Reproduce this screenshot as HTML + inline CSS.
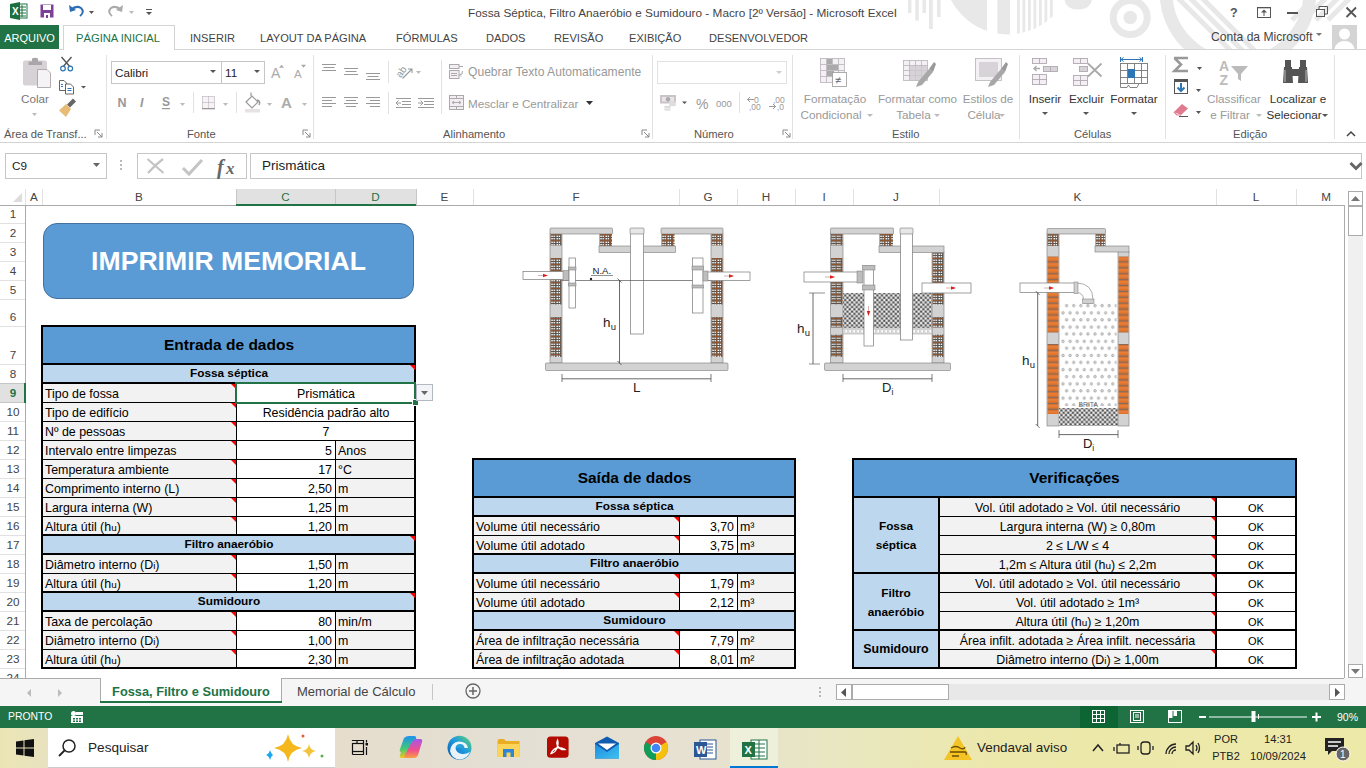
<!DOCTYPE html>
<html><head><meta charset="utf-8"><style>
html,body{margin:0;padding:0;width:1366px;height:768px;overflow:hidden;background:#fff}
body{position:relative;font-family:"Liberation Sans",sans-serif}
body>div,body>svg{position:absolute;white-space:nowrap}
small{font-size:80%}
</style></head><body>
<div style="left:0px;top:0px;width:1366px;height:50px;background:#fff"></div>
<svg style="left:880px;top:0px" width="486" height="50" viewBox="880 0 486 50">
<defs><clipPath id="wmc"><circle cx="1008" cy="-30" r="64.5"/></clipPath>
<clipPath id="wmb"><circle cx="1238" cy="-8" r="66"/></clipPath></defs>
<g fill="#e8e8e8">
<rect x="895" y="7.7" width="1.5" height="9.5"/>
<rect x="908" y="0" width="3.4" height="13"/><rect x="915.3" y="0" width="3.5" height="20.6"/><rect x="922.5" y="0" width="3.5" height="13"/><rect x="929" y="0" width="3.8" height="29"/><rect x="937" y="0" width="3.6" height="17"/>
<g clip-path="url(#wmc)">
<rect x="940" y="-40" width="47" height="80"/><rect x="997.4" y="-40" width="12.6" height="80"/>
<rect x="1017" y="-40" width="2.8" height="80"/><rect x="1022.5" y="-40" width="2.8" height="80"/><rect x="1028" y="-40" width="2.8" height="80"/><rect x="1033.5" y="-40" width="2.8" height="80"/><rect x="1039" y="-40" width="2.8" height="80"/><rect x="1044.5" y="-40" width="2.8" height="80"/><rect x="1050" y="-40" width="2.8" height="80"/>
</g>
<path d="M1064.5 0 H1092 Q1090 9.5 1078 9.5 Q1066 9.5 1064.5 0Z"/>
</g>
<circle cx="1130.2" cy="17.5" r="17" fill="none" stroke="#e8e8e8" stroke-width="7"/>
<circle cx="1130.2" cy="17.5" r="6.8" fill="#e8e8e8"/>
<circle cx="1238" cy="-8" r="72" fill="none" stroke="#e8e8e8" stroke-width="13"/>
<g clip-path="url(#wmb)" stroke="#e8e8e8" stroke-width="5">
<line x1="1170" y1="-10" x2="1240" y2="60"/><line x1="1182" y1="-10" x2="1252" y2="60"/><line x1="1194" y1="-10" x2="1264" y2="60"/>
</g>
<g stroke="#e8e8e8" stroke-width="5">
<line x1="1292" y1="20" x2="1322" y2="-10"/><line x1="1304" y1="20" x2="1334" y2="-10"/><line x1="1316" y1="20" x2="1346" y2="-10"/><line x1="1328" y1="20" x2="1358" y2="-10"/>
</g>
</svg>
<svg style="left:9px;top:2px" width="20" height="18" viewBox="0 0 20 18">
<rect x="7" y="2" width="11" height="14" fill="#fff" stroke="#217346" stroke-width="1"/>
<g stroke="#217346" stroke-width="1"><line x1="10" y1="5" x2="17" y2="5"/><line x1="10" y1="8" x2="17" y2="8"/><line x1="10" y1="11" x2="17" y2="11"/><line x1="10" y1="14" x2="17" y2="14"/><line x1="13" y1="3" x2="13" y2="15"/></g>
<path d="M1 2 L11 0 L11 18 L1 16Z" fill="#1d6f42"/>
<text x="3" y="13" fill="#fff" font-size="10" font-weight="bold" font-family="Liberation Sans">X</text>
</svg>
<svg style="left:40px;top:4px" width="14" height="14" viewBox="0 0 14 14">
<rect x="0.5" y="0.5" width="13" height="13" fill="#7e3f98"/><rect x="3" y="1" width="8" height="5" fill="#fff"/><rect x="4" y="9" width="6" height="5" fill="#fff"/><rect x="6" y="11" width="2" height="3" fill="#7e3f98"/>
</svg>
<svg style="left:68px;top:3px" width="90" height="16" viewBox="0 0 90 16">
<path d="M3 7 Q8 2 13 5 Q17 9 12 13" fill="none" stroke="#2e6db4" stroke-width="2"/><path d="M1 2 L2 9 L8 7Z" fill="#2e6db4"/>
<path d="M21 8 L26 8 L23.5 11Z" fill="#555"/>
<path d="M53 7 Q48 2 43 5 Q39 9 44 13" fill="none" stroke="#aaa" stroke-width="2"/><path d="M55 2 L54 9 L48 7Z" fill="#aaa"/>
<path d="M61 8 L66 8 L63.5 11Z" fill="#bbb"/>
<rect x="78" y="6" width="6" height="1" fill="#555"/><path d="M78 9 L84 9 L81 12Z" fill="#555"/>
</svg>
<div style="left:468px;top:5px;font-size:11.8px;color:#444;line-height:16px">Fossa Séptica, Filtro Anaeróbio e Sumidouro - Macro [2º Versão] - Microsoft Excel</div>
<svg style="left:1222px;top:2px" width="144" height="20" viewBox="0 0 144 20">
<text x="8" y="15" font-size="12.5" font-weight="bold" fill="#555" font-family="Liberation Sans">?</text>
<rect x="35.5" y="5.5" width="13" height="10" fill="none" stroke="#555" stroke-width="1"/><path d="M42 7.5 L39 10.5 L45 10.5Z" fill="#555"/><rect x="41.5" y="10" width="1" height="4" fill="#555"/><rect x="35.5" y="5" width="13" height="1.3" fill="#555"/>
<rect x="65" y="10" width="11" height="2" fill="#555"/>
<rect x="94.5" y="7.5" width="8" height="7" fill="none" stroke="#555"/><path d="M97 7 V4.5 H105.5 V12 H103" fill="none" stroke="#555"/>
<path d="M124.5 5.5 L134 15 M134 5.5 L124.5 15" stroke="#555" stroke-width="1.8"/>
</svg>
<div style="left:0px;top:25px;width:59px;height:24px;background:#217346"></div>
<div style="left:0px;top:26px;width:59px;height:25px;line-height:25px;text-align:center;color:#fff;font-size:11px">ARQUIVO</div>
<div style="left:63px;top:25px;width:112px;height:25px;background:#fff;border:1px solid #d4d4d4;border-bottom:none;box-sizing:border-box"></div>
<div style="left:76px;top:26px;height:25px;line-height:25px;color:#217346;font-size:11.2px">PÁGINA INICIAL</div>
<div style="left:190px;top:26px;height:25px;line-height:25px;color:#444;font-size:11.1px">INSERIR</div>
<div style="left:260px;top:26px;height:25px;line-height:25px;color:#444;font-size:11.1px">LAYOUT DA PÁGINA</div>
<div style="left:396px;top:26px;height:25px;line-height:25px;color:#444;font-size:11.1px">FÓRMULAS</div>
<div style="left:486px;top:26px;height:25px;line-height:25px;color:#444;font-size:11.1px">DADOS</div>
<div style="left:554px;top:26px;height:25px;line-height:25px;color:#444;font-size:11.1px">REVISÃO</div>
<div style="left:629px;top:26px;height:25px;line-height:25px;color:#444;font-size:11.1px">EXIBIÇÃO</div>
<div style="left:709px;top:26px;height:25px;line-height:25px;color:#444;font-size:11.1px">DESENVOLVEDOR</div>
<div style="left:1211px;top:26px;height:23px;line-height:23px;color:#444;font-size:12.1px">Conta da Microsoft</div>
<svg style="left:1316px;top:33px" width="6" height="4"><path d="M0 0 L6 0 L3 3Z" fill="#777"/></svg>
<svg style="left:1332px;top:25px" width="25" height="25" viewBox="0 0 25 25">
<rect width="25" height="25" fill="#d4d4d4"/><circle cx="12.5" cy="9" r="5.5" fill="#fff"/><path d="M2 25 Q4 16 12.5 16 Q21 16 23 25Z" fill="#fff"/>
</svg>
<div style="left:59px;top:49px;width:1307px;height:1px;background:#d4d4d4"></div>
<div style="left:64px;top:49px;width:110px;height:1px;background:#fff"></div>
<div style="left:0px;top:142px;width:1366px;height:1px;background:#d4d4d4"></div>
<div style="left:106px;top:55px;width:1px;height:84px;background:#e1e1e1"></div>
<div style="left:313px;top:55px;width:1px;height:84px;background:#e1e1e1"></div>
<div style="left:652px;top:55px;width:1px;height:84px;background:#e1e1e1"></div>
<div style="left:792px;top:55px;width:1px;height:84px;background:#e1e1e1"></div>
<div style="left:1019px;top:55px;width:1px;height:84px;background:#e1e1e1"></div>
<div style="left:1165px;top:55px;width:1px;height:84px;background:#e1e1e1"></div>
<div style="left:1334px;top:55px;width:1px;height:84px;background:#e1e1e1"></div>
<div style="left:4px;top:126px;height:17px;line-height:17px;color:#555;font-size:11.2px">Área de Transf...</div>
<div style="left:187px;top:126px;height:17px;line-height:17px;color:#555;font-size:11.2px">Fonte</div>
<div style="left:443px;top:126px;height:17px;line-height:17px;color:#555;font-size:11.2px">Alinhamento</div>
<div style="left:694px;top:126px;height:17px;line-height:17px;color:#555;font-size:11.2px">Número</div>
<div style="left:892px;top:126px;height:17px;line-height:17px;color:#555;font-size:11.2px">Estilo</div>
<div style="left:1074px;top:126px;height:17px;line-height:17px;color:#555;font-size:11.2px">Células</div>
<div style="left:1233px;top:126px;height:17px;line-height:17px;color:#555;font-size:11.2px">Edição</div>
<svg style="left:94px;top:129px" width="9" height="9"><path d="M1 1 H6 M1 1 V6" stroke="#888" fill="none"/><path d="M3 3 L8 8 M8 4 V8 H4" stroke="#888" fill="none"/></svg>
<svg style="left:302px;top:129px" width="9" height="9"><path d="M1 1 H6 M1 1 V6" stroke="#888" fill="none"/><path d="M3 3 L8 8 M8 4 V8 H4" stroke="#888" fill="none"/></svg>
<svg style="left:641px;top:129px" width="9" height="9"><path d="M1 1 H6 M1 1 V6" stroke="#888" fill="none"/><path d="M3 3 L8 8 M8 4 V8 H4" stroke="#888" fill="none"/></svg>
<svg style="left:782px;top:129px" width="9" height="9"><path d="M1 1 H6 M1 1 V6" stroke="#888" fill="none"/><path d="M3 3 L8 8 M8 4 V8 H4" stroke="#888" fill="none"/></svg>
<svg style="left:0px;top:50px" width="106" height="75" viewBox="0 50 106 75">
<rect x="23" y="60.5" width="24" height="25" rx="2" fill="#d6d2d6"/>
<path d="M28.5 65 V61.5 H32 V58.5 Q35 57 38 58.5 V61.5 H42 V65Z" fill="#a9a5a9"/>
<path d="M37.5 69.5 H47 L50.5 73 V87.5 H37.5Z" fill="#f6f3f6" stroke="#a9a5a9" stroke-width="0.9"/>
<path d="M32 113 L37 113 L34.5 116Z" fill="#bbb"/>
<path d="M61.5 57 L71 68 M71.5 57 L62 68" stroke="#555" stroke-width="1.4"/>
<circle cx="63" cy="68.5" r="2.3" fill="#fff" stroke="#2e75b6" stroke-width="1.2"/><circle cx="70.3" cy="68.5" r="2.3" fill="#fff" stroke="#2e75b6" stroke-width="1.2"/>
<path d="M59.5 80.5 H64 L66.5 83 V90.5 H59.5Z" fill="#fff" stroke="#555" stroke-width="0.9"/>
<path d="M61 84.5 H63 M61 86.5 H63" stroke="#2e75b6"/>
<path d="M65.5 84 H70.5 L73.5 87 V94 H65.5Z" fill="#fff" stroke="#555" stroke-width="0.9"/>
<path d="M67.5 88.5 H71.5 M67.5 90.5 H71.5" stroke="#2e75b6"/>
<path d="M81 86 L86 86 L83.5 88.5Z" fill="#555"/>
<path d="M59 110.5 L66 104 L71 109 L66 117Z" fill="#e6bc76"/><path d="M67 104.5 L73 98.5 L76 101.5 L70 107.5Z" fill="#666"/>
</svg>
<div style="left:21px;top:91px;height:16px;line-height:16px;color:#777;font-size:11.7px">Colar</div>
<div style="left:111px;top:61px;width:111px;height:23px;background:#fff;border:1px solid #c6c6c6;box-sizing:border-box"></div>
<div style="left:115px;top:61px;height:23px;line-height:23px;color:#222;font-size:11.7px">Calibri</div>
<svg style="left:210px;top:70px" width="6" height="4"><path d="M0 0 L6 0 L3 3Z" fill="#555"/></svg>
<div style="left:221px;top:61px;width:44px;height:23px;background:#fff;border:1px solid #c6c6c6;box-sizing:border-box"></div>
<div style="left:225px;top:61px;height:23px;line-height:23px;color:#222;font-size:11.7px">11</div>
<svg style="left:254px;top:70px" width="6" height="4"><path d="M0 0 L6 0 L3 3Z" fill="#555"/></svg>
<svg style="left:270px;top:62px" width="40" height="22" viewBox="0 0 40 22">
<text x="1" y="16" font-size="14" fill="#aaa" font-family="Liberation Sans">A</text><path d="M9 5.8 L11.5 2.7 L14 5.8Z" fill="#aaa"/>
<text x="24" y="16" font-size="11.5" fill="#aaa" font-family="Liberation Sans">A</text><path d="M31 2.7 L36 2.7 L33.5 5.8Z" fill="#aaa"/>
</svg>
<svg style="left:100px;top:85px" width="220" height="40" viewBox="100 85 220 40">
<text x="117.5" y="107" font-size="12.5" font-weight="bold" fill="#999" font-family="Liberation Sans">N</text>
<text x="140" y="107" font-size="12.5" font-weight="bold" font-style="italic" fill="#999" font-family="Liberation Sans">I</text>
<text x="162" y="106" font-size="12" font-weight="bold" fill="#999" font-family="Liberation Sans">S</text><rect x="162" y="108" width="8" height="1.2" fill="#999"/>
<path d="M180 103 L185 103 L182.5 106Z" fill="#bbb"/>
<rect x="193" y="92" width="1" height="21" fill="#e1e1e1"/>
<rect x="202" y="96" width="13" height="13" fill="#f6f2f6"/>
<g fill="none" stroke="#a8a0a8" stroke-width="0.9" stroke-dasharray="1 1"><path d="M202.5 96.5 H214.5 V108 M202.5 96.5 V108 M208.5 96.5 V108 M202.5 102.5 H214.5"/></g>
<rect x="202" y="108" width="13" height="1.3" fill="#999"/>
<path d="M223 103 L228 103 L225.5 106Z" fill="#bbb"/>
<rect x="236" y="92" width="1" height="21" fill="#e1e1e1"/>
<path d="M246 102 L252 96 L258 102 L252 108Z" fill="#fff" stroke="#999" stroke-width="1.2"/><path d="M251 96 V92.5" stroke="#999" stroke-width="1.2"/><path d="M257 100 Q261 101 259 105" stroke="#999" stroke-width="1.5" fill="none"/>
<rect x="245" y="109" width="15" height="3.5" fill="#e6e2e6"/>
<path d="M267 103 L272 103 L269.5 106Z" fill="#bbb"/>
<text x="281" y="108" font-size="15" font-weight="bold" fill="#aaa" font-family="Liberation Sans">A</text>
<path d="M302 103 L307 103 L304.5 106Z" fill="#bbb"/>
</svg>
<svg style="left:318px;top:60px" width="330" height="60" viewBox="0 0 330 60">
<g stroke="#999" stroke-width="1">
<line x1="4" y1="4.5" x2="18" y2="4.5"/><line x1="5.5" y1="7.5" x2="16.5" y2="7.5"/><line x1="4" y1="10.5" x2="18" y2="10.5"/>
<line x1="26" y1="8.5" x2="40" y2="8.5"/><line x1="27.5" y1="11.5" x2="38.5" y2="11.5"/><line x1="26" y1="14.5" x2="40" y2="14.5"/>
<line x1="48" y1="13.5" x2="62" y2="13.5"/><line x1="49.5" y1="16.5" x2="60.5" y2="16.5"/><line x1="48" y1="19.5" x2="62" y2="19.5"/>
<line x1="4" y1="37.5" x2="18" y2="37.5"/><line x1="4" y1="40.5" x2="14" y2="40.5"/><line x1="4" y1="43.5" x2="18" y2="43.5"/><line x1="4" y1="46.5" x2="14" y2="46.5"/>
<line x1="26" y1="37.5" x2="40" y2="37.5"/><line x1="28" y1="40.5" x2="38" y2="40.5"/><line x1="26" y1="43.5" x2="40" y2="43.5"/><line x1="28" y1="46.5" x2="38" y2="46.5"/>
<line x1="48" y1="37.5" x2="62" y2="37.5"/><line x1="52" y1="40.5" x2="62" y2="40.5"/><line x1="48" y1="43.5" x2="62" y2="43.5"/><line x1="52" y1="46.5" x2="62" y2="46.5"/>
<line x1="78" y1="38.5" x2="93" y2="38.5"/><line x1="84" y1="41.5" x2="93" y2="41.5"/><line x1="84" y1="44.5" x2="93" y2="44.5"/><line x1="78" y1="47.5" x2="93" y2="47.5"/>
<path d="M78 43 H83 M80.5 40.5 L78 43 L80.5 45.5" fill="none"/>
<line x1="100" y1="38.5" x2="116" y2="38.5"/><line x1="106" y1="41.5" x2="116" y2="41.5"/><line x1="106" y1="44.5" x2="116" y2="44.5"/><line x1="100" y1="47.5" x2="116" y2="47.5"/>
<path d="M100 43 H105 M102.5 40.5 L105 43 L102.5 45.5" fill="none"/>
</g>
<rect x="70" y="1" width="1" height="22" fill="#e1e1e1"/><rect x="70" y="32" width="1" height="22" fill="#e1e1e1"/>
<text x="77" y="15" font-size="10" fill="#999" font-family="Liberation Sans" transform="rotate(-55 83 11)">ab</text><path d="M84.5 18.5 L94 9 M90 9 H94 V13" stroke="#999" fill="none" stroke-width="1.1"/>
<path d="M98 11 L103 11 L100.5 14Z" fill="#bbb"/>
<rect x="123" y="0" width="1" height="54" fill="#e1e1e1"/>
<g fill="none" stroke="#aaa"><rect x="131.5" y="4.5" width="9.5" height="4" fill="#f4eef4"/><path d="M141 6.5 H145"/><rect x="131.5" y="10.5" width="9.5" height="8" fill="#f4eef4"/><path d="M133 13.5 H139 M133 15.5 H139 M144.5 11 Q145 15 141.5 15 M143 13.5 L141.5 15 L143 16.5"/>
<rect x="131.5" y="35.5" width="14" height="14" fill="#f4eef4"/><path d="M131.5 38.5 H145.5 M131.5 46.5 H145.5 M138.5 35.5 V38.5 M138.5 46.5 V49.5 M134 42.5 H143 M136 41 L134 42.5 L136 44 M141 41 L143 42.5 L141 44"/></g>
</svg>
<div style="left:468px;top:64px;height:17px;line-height:17px;color:#999;font-size:12.1px">Quebrar Texto Automaticamente</div>
<div style="left:468px;top:95px;height:17px;line-height:17px;color:#999;font-size:11.7px">Mesclar e Centralizar</div>
<svg style="left:586px;top:101px" width="7" height="4"><path d="M0 0 L7 0 L3.5 4Z" fill="#333"/></svg>
<div style="left:657px;top:61px;width:130px;height:23px;background:#fff;border:1px solid #e1e1e1;box-sizing:border-box"></div>
<svg style="left:776px;top:71px" width="6" height="4"><path d="M0 0 L6 0 L3 3Z" fill="#ccc"/></svg>
<svg style="left:650px;top:85px" width="150" height="40" viewBox="650 85 150 40">
<rect x="660" y="95" width="16" height="8.5" fill="#c8c4c8"/><rect x="662" y="97" width="12" height="4.5" fill="#e8e4e8"/><circle cx="668" cy="99.2" r="2.2" fill="#aaa"/>
<ellipse cx="672.5" cy="102.5" rx="3.5" ry="1.3" fill="#ddd"/><ellipse cx="672.5" cy="105" rx="3.5" ry="1.3" fill="#ddd"/><ellipse cx="667.5" cy="107" rx="3.5" ry="1.3" fill="#ddd"/><ellipse cx="667.5" cy="109.5" rx="3.5" ry="1.3" fill="#e2e2e2"/>
<path d="M682 101.5 L687 101.5 L684.5 104Z" fill="#555"/>
<text x="696" y="109" font-size="14" fill="#999" font-family="Liberation Sans">%</text>
<text x="716" y="106.5" font-size="9.5" fill="#999" font-family="Liberation Sans">000</text>
<rect x="739" y="92" width="1" height="21" fill="#e1e1e1"/>
<text x="754" y="103" font-size="8.5" fill="#999" font-family="Liberation Sans">0</text><text x="749" y="109.5" font-size="8.5" fill="#999" font-family="Liberation Sans">,00</text>
<path d="M754 99.5 H747.5 M750 97 L747.5 99.5 L750 102" stroke="#999" fill="none"/>
<text x="773" y="103" font-size="8.5" fill="#999" font-family="Liberation Sans">,00</text><text x="777" y="109.5" font-size="8.5" fill="#999" font-family="Liberation Sans">,0</text>
<path d="M769 106.5 H775.5 M773 104 L775.5 106.5 L773 109" stroke="#999" fill="none"/>
</svg>
<svg style="left:815px;top:56px" width="200" height="34" viewBox="0 0 200 34">
<g stroke="#b8b2b8" stroke-width="0.8" fill="#f4f1f4">
<rect x="5.5" y="2.5" width="24" height="24"/>
<path d="M5.5 8.5 H29.5 M5.5 14.5 H29.5 M5.5 20.5 H29.5 M11.5 2.5 V26.5 M17.5 2.5 V26.5 M23.5 2.5 V26.5" fill="none"/>
</g>
<rect x="12" y="3" width="5" height="5" fill="#aaa"/><rect x="12" y="9" width="11" height="5" fill="#aaa"/><rect x="12" y="15" width="7" height="5" fill="#aaa"/>
<rect x="17.5" y="16.5" width="14" height="14" fill="#fff" stroke="#999" stroke-width="0.8"/>
<text x="20" y="28" font-size="11" fill="#666" font-family="Liberation Sans">≠</text>
<g stroke="#b8b2b8" stroke-width="0.8" fill="#f4f1f4">
<rect x="88.5" y="4.5" width="24" height="20"/>
<path d="M88.5 9.5 H112.5 M88.5 14.5 H112.5 M88.5 19.5 H112.5 M94.5 4.5 V24.5 M100.5 4.5 V24.5 M106.5 4.5 V24.5" fill="none"/>
</g>
<rect x="95" y="10" width="17" height="14" fill="#cfcacf" opacity="0.8"/>
<path d="M101 31 L103 26 L114 13 L118 16 L107 29Z" fill="#a8a8a8"/><path d="M114 13 L119 6 L121 8 L118 16Z" fill="#999"/>
<g stroke="#b8b2b8" stroke-width="0.8" fill="#f4f1f4"><rect x="160.5" y="2.5" width="26" height="22"/></g>
<rect x="164" y="6" width="19" height="15" fill="#d8d3d8"/>
<path d="M173 31 L175 26 L186 13 L190 16 L179 29Z" fill="#a8a8a8"/><path d="M186 13 L191 6 L193 8 L190 16Z" fill="#999"/>
</svg>
<div style="left:799px;top:90px;width:72px;height:17px;line-height:17px;text-align:center;color:#999;font-size:11.7px">Formatação</div>
<div style="left:795px;top:106px;width:72px;height:17px;line-height:17px;text-align:center;color:#999;font-size:11.7px">Condicional</div>
<svg style="left:867px;top:114px" width="6" height="4"><path d="M0 0 L6 0 L3 3Z" fill="#bbb"/></svg>
<div style="left:875px;top:90px;width:85px;height:17px;line-height:17px;text-align:center;color:#999;font-size:11.7px">Formatar como</div>
<div style="left:871px;top:106px;width:85px;height:17px;line-height:17px;text-align:center;color:#999;font-size:11.7px">Tabela</div>
<svg style="left:934px;top:114px" width="6" height="4"><path d="M0 0 L6 0 L3 3Z" fill="#bbb"/></svg>
<div style="left:962px;top:90px;width:52px;height:17px;line-height:17px;text-align:center;color:#999;font-size:11.7px">Estilos de</div>
<div style="left:958px;top:106px;width:52px;height:17px;line-height:17px;text-align:center;color:#999;font-size:11.7px">Célula</div>
<svg style="left:999px;top:114px" width="6" height="4"><path d="M0 0 L6 0 L3 3Z" fill="#bbb"/></svg>
<svg style="left:1000px;top:50px" width="170" height="40" viewBox="1000 50 170 40">
<g fill="#f4eff4" stroke="#b0a8b0" stroke-width="0.9">
<rect x="1032.5" y="58.5" width="14" height="5"/><line x1="1039.5" y1="58.5" x2="1039.5" y2="63.5"/>
<rect x="1043.5" y="66.5" width="14" height="5" fill="#d8d3d8"/><line x1="1050.5" y1="66.5" x2="1050.5" y2="71.5"/>
<rect x="1032.5" y="74.5" width="14" height="10"/><path d="M1032.5 79.5 H1046.5 M1039.5 74.5 V84.5"/>
<rect x="1073.5" y="58.5" width="14" height="5"/><line x1="1080.5" y1="58.5" x2="1080.5" y2="63.5"/>
<rect x="1079.5" y="66.5" width="8" height="5" fill="#d8d3d8"/>
<rect x="1073.5" y="75.5" width="14" height="10"/><path d="M1073.5 80.5 H1087.5 M1080.5 75.5 V85.5"/>
</g>
<path d="M1040 68.5 H1034 M1036.5 66 L1034 68.5 L1036.5 71" stroke="#aaa" stroke-width="1.3" fill="none"/>
<path d="M1088 63.5 L1101.5 76.5 M1101.5 63.5 L1088 76.5" stroke="#aaa" stroke-width="1.8"/>
<g fill="#fff" stroke="#777" stroke-width="0.9">
<rect x="1120.5" y="63.5" width="27" height="20"/>
<path d="M1120.5 70.5 H1147.5 M1120.5 77.5 H1147.5 M1127.5 63.5 V83.5 M1134.5 63.5 V83.5 M1141.5 63.5 V83.5" fill="none"/>
<path d="M1120.5 83.5 V87.5 H1127 L1128.5 85 L1130 87.5 H1137 L1139 83.5" fill="none"/>
</g>
<rect x="1128" y="69" width="7" height="9" fill="#2e75b6"/>
<path d="M1120.5 59.5 H1142.5 M1120.5 57 V62 M1142.5 57 V62 M1123.5 57.5 L1121 59.5 L1123.5 61.5 M1139.5 57.5 L1142 59.5 L1139.5 61.5" stroke="#2e75b6" stroke-width="1" fill="none"/>
</svg>
<div style="left:1027px;top:90px;width:36px;height:17px;line-height:17px;text-align:center;color:#333;font-size:11.7px">Inserir</div>
<svg style="left:1042px;top:112px" width="6" height="4"><path d="M0 0 L6 0 L3 3Z" fill="#555"/></svg>
<div style="left:1068px;top:90px;width:37px;height:17px;line-height:17px;text-align:center;color:#333;font-size:11.7px">Excluir</div>
<svg style="left:1083px;top:112px" width="6" height="4"><path d="M0 0 L6 0 L3 3Z" fill="#555"/></svg>
<div style="left:1109px;top:90px;width:50px;height:17px;line-height:17px;text-align:center;color:#333;font-size:11.7px">Formatar</div>
<svg style="left:1131px;top:112px" width="6" height="4"><path d="M0 0 L6 0 L3 3Z" fill="#555"/></svg>
<svg style="left:1170px;top:54px" width="160" height="70" viewBox="0 0 160 70">
<path d="M4 4 H18 M4.5 4 L11 10.5 L4.5 17 H18" stroke="#999" stroke-width="2.6" fill="none" stroke-linejoin="miter"/><path d="M27 13 L32 13 L29.5 16Z" fill="#555"/>
<rect x="4.5" y="25.5" width="13" height="14" fill="#fff" stroke="#555"/><rect x="4" y="25" width="14" height="3" fill="#555"/><path d="M11 29 V37 M7.5 33.5 L11 37 L14.5 33.5" stroke="#2e75b6" stroke-width="2" fill="none"/>
<path d="M26 35 L31 35 L28.5 38Z" fill="#555"/>
<path d="M4 58 L12 50 L18 54.5 L11 61Z" fill="#e07a8e"/><path d="M4 58 L7 61 H11" stroke="#e07a8e" stroke-width="1.2" fill="none"/><path d="M9 62.5 H18" stroke="#555"/><path d="M26 57 L31 57 L28.5 60Z" fill="#555"/>
<text x="49" y="17" font-size="14" font-weight="bold" fill="#bbb" font-family="Liberation Sans">A</text><text x="49.5" y="31" font-size="14" font-weight="bold" fill="#bbb" font-family="Liberation Sans">Z</text>
<path d="M61 12 H78 L71 20 V27 L68 25 V20Z" fill="#bbb"/>
<g transform="translate(113,6)" fill="#555"><rect x="2" y="0" width="6" height="7"/><rect x="17" y="0" width="6" height="7"/><path d="M1 7 H9 L10 23 H0Z"/><path d="M16 7 H24 L25 23 H15Z"/><rect x="9" y="9" width="7" height="7"/><g fill="#fff" opacity="0.6"><rect x="1.5" y="10" width="1" height="12"/><rect x="22.5" y="10" width="1" height="12"/></g></g>
</svg>
<div style="left:1204px;top:90px;width:60px;height:17px;line-height:17px;text-align:center;color:#999;font-size:11.7px">Classificar</div>
<div style="left:1200px;top:106px;width:60px;height:17px;line-height:17px;text-align:center;color:#999;font-size:11.7px">e Filtrar</div>
<svg style="left:1256px;top:114px" width="6" height="4"><path d="M0 0 L6 0 L3 3Z" fill="#bbb"/></svg>
<div style="left:1265px;top:90px;width:66px;height:17px;line-height:17px;text-align:center;color:#333;font-size:11.7px">Localizar e</div>
<div style="left:1261px;top:106px;width:66px;height:17px;line-height:17px;text-align:center;color:#333;font-size:11.7px">Selecionar</div>
<svg style="left:1322px;top:114px" width="6" height="4"><path d="M0 0 L6 0 L3 3Z" fill="#555"/></svg>
<svg style="left:1346px;top:130px" width="10" height="7"><path d="M1 6 L5 2 L9 6" stroke="#444" stroke-width="1.5" fill="none"/></svg>
<div style="left:0px;top:143px;width:1366px;height:46px;background:#fff"></div>
<div style="left:5px;top:153px;width:102px;height:26px;background:#fff;border:1px solid #c6c6c6;box-sizing:border-box"></div>
<div style="left:12px;top:153px;height:26px;line-height:26px;color:#222;font-size:11.7px">C9</div>
<svg style="left:93px;top:163px" width="7" height="5"><path d="M0 0 L7 0 L3.5 4Z" fill="#666"/></svg>
<svg style="left:119px;top:159px" width="4" height="14"><circle cx="2" cy="2" r="0.9" fill="#999"/><circle cx="2" cy="6" r="0.9" fill="#999"/><circle cx="2" cy="10" r="0.9" fill="#999"/></svg>
<div style="left:137px;top:153px;width:110px;height:26px;background:#fff;border:1px solid #c6c6c6;box-sizing:border-box"></div>
<svg style="left:137px;top:153px" width="110" height="26" viewBox="0 0 110 26">
<path d="M10.5 6 L26.5 20 M26 6 Q18 12 11 20" stroke="#c4c4c4" stroke-width="2.2" fill="none"/>
<path d="M46 15 L52 21 L65 7" stroke="#c4c4c4" stroke-width="3" fill="none"/>
<text x="80" y="20.5" font-size="20" font-style="italic" font-weight="bold" fill="#666" font-family="Liberation Serif">f</text><text x="89" y="20.5" font-size="17" font-style="italic" font-weight="bold" fill="#666" font-family="Liberation Serif">x</text>
</svg>
<div style="left:250px;top:153px;width:1112px;height:26px;background:#fff;border:1px solid #c6c6c6;box-sizing:border-box"></div>
<div style="left:262px;top:153px;height:26px;line-height:26px;color:#222;font-size:13.5px">Prismática</div>
<svg style="left:1349px;top:161px" width="14" height="10"><path d="M1.5 2 L7 7.5 L12.5 2" stroke="#666" stroke-width="3" fill="none"/></svg>
<div style="left:26px;top:206px;width:1318px;height:472px;background:#fff"></div>
<div style="left:0px;top:189px;width:1345px;height:16px;background:#fff"></div>
<svg style="left:13px;top:193px" width="9" height="9"><path d="M9 0 L9 9 L0 9Z" fill="#dcdcdc"/></svg>
<div style="left:25px;top:189px;width:1px;height:16px;background:#e1e1e1"></div>
<div style="left:0px;top:205px;width:1345px;height:1px;background:#ababab"></div>
<div style="left:26px;top:189px;width:16px;height:16px;line-height:16px;text-align:center;color:#444;font-size:11.7px">A</div>
<div style="left:42px;top:189px;width:194px;height:16px;line-height:16px;text-align:center;color:#444;font-size:11.7px">B</div>
<div style="left:236px;top:189px;width:99px;height:16px;background:#e1e1e1"></div>
<div style="left:236px;top:189px;width:99px;height:16px;line-height:16px;text-align:center;color:#217346;font-size:11.7px">C</div>
<div style="left:335px;top:189px;width:81px;height:16px;background:#e1e1e1"></div>
<div style="left:335px;top:189px;width:81px;height:16px;line-height:16px;text-align:center;color:#217346;font-size:11.7px">D</div>
<div style="left:416px;top:189px;width:57px;height:16px;line-height:16px;text-align:center;color:#444;font-size:11.7px">E</div>
<div style="left:473px;top:189px;width:206px;height:16px;line-height:16px;text-align:center;color:#444;font-size:11.7px">F</div>
<div style="left:679px;top:189px;width:58px;height:16px;line-height:16px;text-align:center;color:#444;font-size:11.7px">G</div>
<div style="left:737px;top:189px;width:58px;height:16px;line-height:16px;text-align:center;color:#444;font-size:11.7px">H</div>
<div style="left:795px;top:189px;width:58px;height:16px;line-height:16px;text-align:center;color:#444;font-size:11.7px">I</div>
<div style="left:853px;top:189px;width:86px;height:16px;line-height:16px;text-align:center;color:#444;font-size:11.7px">J</div>
<div style="left:939px;top:189px;width:277px;height:16px;line-height:16px;text-align:center;color:#444;font-size:11.7px">K</div>
<div style="left:1216px;top:189px;width:80px;height:16px;line-height:16px;text-align:center;color:#444;font-size:11.7px">L</div>
<div style="left:1296px;top:189px;width:60px;height:16px;line-height:16px;text-align:center;color:#444;font-size:11.7px">M</div>
<div style="left:42px;top:189px;width:1px;height:16px;background:#e1e1e1"></div>
<div style="left:236px;top:189px;width:1px;height:16px;background:#c6c6c6"></div>
<div style="left:335px;top:189px;width:1px;height:16px;background:#c6c6c6"></div>
<div style="left:416px;top:189px;width:1px;height:16px;background:#c6c6c6"></div>
<div style="left:473px;top:189px;width:1px;height:16px;background:#e1e1e1"></div>
<div style="left:679px;top:189px;width:1px;height:16px;background:#e1e1e1"></div>
<div style="left:737px;top:189px;width:1px;height:16px;background:#e1e1e1"></div>
<div style="left:795px;top:189px;width:1px;height:16px;background:#e1e1e1"></div>
<div style="left:853px;top:189px;width:1px;height:16px;background:#e1e1e1"></div>
<div style="left:939px;top:189px;width:1px;height:16px;background:#e1e1e1"></div>
<div style="left:1216px;top:189px;width:1px;height:16px;background:#e1e1e1"></div>
<div style="left:1296px;top:189px;width:1px;height:16px;background:#e1e1e1"></div>
<div style="left:1356px;top:189px;width:1px;height:16px;background:#e1e1e1"></div>
<div style="left:236px;top:204px;width:180px;height:2px;background:#217346"></div>
<div style="left:0px;top:206px;width:25px;height:472px;background:#fff"></div>
<div style="left:0px;top:223px;width:25px;height:1px;background:#e1e1e1"></div>
<div style="left:1px;top:205px;width:24px;height:18px;line-height:18px;text-align:center;color:#444;font-size:11.7px">1</div>
<div style="left:0px;top:242px;width:25px;height:1px;background:#e1e1e1"></div>
<div style="left:1px;top:224px;width:24px;height:18px;line-height:18px;text-align:center;color:#444;font-size:11.7px">2</div>
<div style="left:0px;top:261px;width:25px;height:1px;background:#e1e1e1"></div>
<div style="left:1px;top:243px;width:24px;height:18px;line-height:18px;text-align:center;color:#444;font-size:11.7px">3</div>
<div style="left:0px;top:280px;width:25px;height:1px;background:#e1e1e1"></div>
<div style="left:1px;top:262px;width:24px;height:18px;line-height:18px;text-align:center;color:#444;font-size:11.7px">4</div>
<div style="left:0px;top:299px;width:25px;height:1px;background:#e1e1e1"></div>
<div style="left:1px;top:281px;width:24px;height:18px;line-height:18px;text-align:center;color:#444;font-size:11.7px">5</div>
<div style="left:0px;top:326px;width:25px;height:1px;background:#e1e1e1"></div>
<div style="left:1px;top:308px;width:24px;height:18px;line-height:18px;text-align:center;color:#444;font-size:11.7px">6</div>
<div style="left:0px;top:364px;width:25px;height:1px;background:#e1e1e1"></div>
<div style="left:1px;top:346px;width:24px;height:18px;line-height:18px;text-align:center;color:#444;font-size:11.7px">7</div>
<div style="left:0px;top:383px;width:25px;height:1px;background:#e1e1e1"></div>
<div style="left:1px;top:365px;width:24px;height:18px;line-height:18px;text-align:center;color:#444;font-size:11.7px">8</div>
<div style="left:0px;top:383px;width:24px;height:20px;background:#e1e1e1;border-top:1px solid #c6c6c6;border-bottom:1px solid #c6c6c6;box-sizing:border-box"></div>
<div style="left:1px;top:384px;width:24px;height:18px;line-height:18px;text-align:center;color:#217346;font-size:11.7px;font-weight:bold">9</div>
<div style="left:0px;top:421px;width:25px;height:1px;background:#e1e1e1"></div>
<div style="left:1px;top:403px;width:24px;height:18px;line-height:18px;text-align:center;color:#444;font-size:11.7px">10</div>
<div style="left:0px;top:440px;width:25px;height:1px;background:#e1e1e1"></div>
<div style="left:1px;top:422px;width:24px;height:18px;line-height:18px;text-align:center;color:#444;font-size:11.7px">11</div>
<div style="left:0px;top:459px;width:25px;height:1px;background:#e1e1e1"></div>
<div style="left:1px;top:441px;width:24px;height:18px;line-height:18px;text-align:center;color:#444;font-size:11.7px">12</div>
<div style="left:0px;top:478px;width:25px;height:1px;background:#e1e1e1"></div>
<div style="left:1px;top:460px;width:24px;height:18px;line-height:18px;text-align:center;color:#444;font-size:11.7px">13</div>
<div style="left:0px;top:497px;width:25px;height:1px;background:#e1e1e1"></div>
<div style="left:1px;top:479px;width:24px;height:18px;line-height:18px;text-align:center;color:#444;font-size:11.7px">14</div>
<div style="left:0px;top:516px;width:25px;height:1px;background:#e1e1e1"></div>
<div style="left:1px;top:498px;width:24px;height:18px;line-height:18px;text-align:center;color:#444;font-size:11.7px">15</div>
<div style="left:0px;top:535px;width:25px;height:1px;background:#e1e1e1"></div>
<div style="left:1px;top:517px;width:24px;height:18px;line-height:18px;text-align:center;color:#444;font-size:11.7px">16</div>
<div style="left:0px;top:554px;width:25px;height:1px;background:#e1e1e1"></div>
<div style="left:1px;top:536px;width:24px;height:18px;line-height:18px;text-align:center;color:#444;font-size:11.7px">17</div>
<div style="left:0px;top:573px;width:25px;height:1px;background:#e1e1e1"></div>
<div style="left:1px;top:555px;width:24px;height:18px;line-height:18px;text-align:center;color:#444;font-size:11.7px">18</div>
<div style="left:0px;top:592px;width:25px;height:1px;background:#e1e1e1"></div>
<div style="left:1px;top:574px;width:24px;height:18px;line-height:18px;text-align:center;color:#444;font-size:11.7px">19</div>
<div style="left:0px;top:611px;width:25px;height:1px;background:#e1e1e1"></div>
<div style="left:1px;top:593px;width:24px;height:18px;line-height:18px;text-align:center;color:#444;font-size:11.7px">20</div>
<div style="left:0px;top:630px;width:25px;height:1px;background:#e1e1e1"></div>
<div style="left:1px;top:612px;width:24px;height:18px;line-height:18px;text-align:center;color:#444;font-size:11.7px">21</div>
<div style="left:0px;top:649px;width:25px;height:1px;background:#e1e1e1"></div>
<div style="left:1px;top:631px;width:24px;height:18px;line-height:18px;text-align:center;color:#444;font-size:11.7px">22</div>
<div style="left:0px;top:668px;width:25px;height:1px;background:#e1e1e1"></div>
<div style="left:1px;top:650px;width:24px;height:18px;line-height:18px;text-align:center;color:#444;font-size:11.7px">23</div>
<div style="left:1px;top:669px;width:24px;height:18px;line-height:18px;text-align:center;color:#444;font-size:11.7px">24</div>
<div style="left:25px;top:206px;width:1px;height:472px;background:#ababab"></div>
<div style="left:24px;top:383px;width:2px;height:20px;background:#217346"></div>
<div style="left:43px;top:223px;width:371px;height:76px;background:#5b9bd5;border:1px solid #41719c;border-radius:14px;box-sizing:border-box"></div>
<div style="left:43px;top:223px;width:371px;height:76px;line-height:76px;text-align:center;color:#fff;font-size:26.6px;font-weight:bold">IMPRIMIR MEMORIAL</div>
<div style="left:42px;top:326px;width:374px;height:38px;background:#5b9bd5"></div>
<div style="left:42px;top:326px;width:374px;height:38px;line-height:38px;text-align:center;font-size:15.5px;color:#000;white-space:nowrap;font-weight:bold;">Entrada de dados</div>
<div style="left:42px;top:364px;width:374px;height:19px;background:#bdd7ee"></div>
<div style="left:42px;top:364px;width:374px;height:19px;line-height:19px;text-align:center;font-size:11.8px;color:#000;white-space:nowrap;font-weight:bold;">Fossa séptica</div>
<div style="left:42px;top:383px;width:194px;height:19px;background:#f2f2f2"></div>
<div style="left:42px;top:386px;width:194px;height:17px;line-height:17px;font-size:12.4px;color:#000;white-space:nowrap;padding-left:3px;box-sizing:border-box;">Tipo de fossa</div>
<div style="left:236px;top:383px;width:180px;height:19px;background:#fff"></div>
<div style="left:236px;top:386px;width:180px;height:17px;line-height:17px;text-align:center;font-size:12.4px;color:#000;white-space:nowrap;">Prismática</div>
<div style="left:42px;top:402px;width:194px;height:19px;background:#f2f2f2"></div>
<div style="left:42px;top:405px;width:194px;height:17px;line-height:17px;font-size:12.4px;color:#000;white-space:nowrap;padding-left:3px;box-sizing:border-box;">Tipo de edifício</div>
<div style="left:236px;top:402px;width:180px;height:19px;background:#fff"></div>
<div style="left:236px;top:405px;width:180px;height:17px;line-height:17px;text-align:center;font-size:12.4px;color:#000;white-space:nowrap;">Residência padrão alto</div>
<div style="left:42px;top:421px;width:194px;height:19px;background:#f2f2f2"></div>
<div style="left:42px;top:424px;width:194px;height:17px;line-height:17px;font-size:12.4px;color:#000;white-space:nowrap;padding-left:3px;box-sizing:border-box;">Nº de pessoas</div>
<div style="left:236px;top:421px;width:180px;height:19px;background:#fff"></div>
<div style="left:236px;top:424px;width:180px;height:17px;line-height:17px;text-align:center;font-size:12.4px;color:#000;white-space:nowrap;">7</div>
<div style="left:42px;top:440px;width:194px;height:19px;background:#f2f2f2"></div>
<div style="left:42px;top:443px;width:194px;height:17px;line-height:17px;font-size:12.4px;color:#000;white-space:nowrap;padding-left:3px;box-sizing:border-box;">Intervalo entre limpezas</div>
<div style="left:236px;top:440px;width:99px;height:19px;background:#fff"></div>
<div style="left:236px;top:443px;width:99px;height:17px;line-height:17px;text-align:right;font-size:12.4px;color:#000;white-space:nowrap;padding-right:3px;box-sizing:border-box;">5</div>
<div style="left:335px;top:440px;width:81px;height:19px;background:#f2f2f2"></div>
<div style="left:335px;top:443px;width:81px;height:17px;line-height:17px;font-size:12.4px;color:#000;white-space:nowrap;padding-left:3px;box-sizing:border-box;">Anos</div>
<div style="left:42px;top:459px;width:194px;height:19px;background:#f2f2f2"></div>
<div style="left:42px;top:462px;width:194px;height:17px;line-height:17px;font-size:12.4px;color:#000;white-space:nowrap;padding-left:3px;box-sizing:border-box;">Temperatura ambiente</div>
<div style="left:236px;top:459px;width:99px;height:19px;background:#fff"></div>
<div style="left:236px;top:462px;width:99px;height:17px;line-height:17px;text-align:right;font-size:12.4px;color:#000;white-space:nowrap;padding-right:3px;box-sizing:border-box;">17</div>
<div style="left:335px;top:459px;width:81px;height:19px;background:#f2f2f2"></div>
<div style="left:335px;top:462px;width:81px;height:17px;line-height:17px;font-size:12.4px;color:#000;white-space:nowrap;padding-left:3px;box-sizing:border-box;">°C</div>
<div style="left:42px;top:478px;width:194px;height:19px;background:#f2f2f2"></div>
<div style="left:42px;top:481px;width:194px;height:17px;line-height:17px;font-size:12.4px;color:#000;white-space:nowrap;padding-left:3px;box-sizing:border-box;">Comprimento interno (L)</div>
<div style="left:236px;top:478px;width:99px;height:19px;background:#fff"></div>
<div style="left:236px;top:481px;width:99px;height:17px;line-height:17px;text-align:right;font-size:12.4px;color:#000;white-space:nowrap;padding-right:3px;box-sizing:border-box;">2,50</div>
<div style="left:335px;top:478px;width:81px;height:19px;background:#f2f2f2"></div>
<div style="left:335px;top:481px;width:81px;height:17px;line-height:17px;font-size:12.4px;color:#000;white-space:nowrap;padding-left:3px;box-sizing:border-box;">m</div>
<div style="left:42px;top:497px;width:194px;height:19px;background:#f2f2f2"></div>
<div style="left:42px;top:500px;width:194px;height:17px;line-height:17px;font-size:12.4px;color:#000;white-space:nowrap;padding-left:3px;box-sizing:border-box;">Largura interna (W)</div>
<div style="left:236px;top:497px;width:99px;height:19px;background:#fff"></div>
<div style="left:236px;top:500px;width:99px;height:17px;line-height:17px;text-align:right;font-size:12.4px;color:#000;white-space:nowrap;padding-right:3px;box-sizing:border-box;">1,25</div>
<div style="left:335px;top:497px;width:81px;height:19px;background:#f2f2f2"></div>
<div style="left:335px;top:500px;width:81px;height:17px;line-height:17px;font-size:12.4px;color:#000;white-space:nowrap;padding-left:3px;box-sizing:border-box;">m</div>
<div style="left:42px;top:516px;width:194px;height:19px;background:#f2f2f2"></div>
<div style="left:42px;top:519px;width:194px;height:17px;line-height:17px;font-size:12.4px;color:#000;white-space:nowrap;padding-left:3px;box-sizing:border-box;">Altura útil (h<small>u</small>)</div>
<div style="left:236px;top:516px;width:99px;height:19px;background:#fff"></div>
<div style="left:236px;top:519px;width:99px;height:17px;line-height:17px;text-align:right;font-size:12.4px;color:#000;white-space:nowrap;padding-right:3px;box-sizing:border-box;">1,20</div>
<div style="left:335px;top:516px;width:81px;height:19px;background:#f2f2f2"></div>
<div style="left:335px;top:519px;width:81px;height:17px;line-height:17px;font-size:12.4px;color:#000;white-space:nowrap;padding-left:3px;box-sizing:border-box;">m</div>
<div style="left:42px;top:554px;width:194px;height:19px;background:#f2f2f2"></div>
<div style="left:42px;top:557px;width:194px;height:17px;line-height:17px;font-size:12.4px;color:#000;white-space:nowrap;padding-left:3px;box-sizing:border-box;">Diâmetro interno (D<small>i</small>)</div>
<div style="left:236px;top:554px;width:99px;height:19px;background:#fff"></div>
<div style="left:236px;top:557px;width:99px;height:17px;line-height:17px;text-align:right;font-size:12.4px;color:#000;white-space:nowrap;padding-right:3px;box-sizing:border-box;">1,50</div>
<div style="left:335px;top:554px;width:81px;height:19px;background:#f2f2f2"></div>
<div style="left:335px;top:557px;width:81px;height:17px;line-height:17px;font-size:12.4px;color:#000;white-space:nowrap;padding-left:3px;box-sizing:border-box;">m</div>
<div style="left:42px;top:573px;width:194px;height:19px;background:#f2f2f2"></div>
<div style="left:42px;top:576px;width:194px;height:17px;line-height:17px;font-size:12.4px;color:#000;white-space:nowrap;padding-left:3px;box-sizing:border-box;">Altura útil (h<small>u</small>)</div>
<div style="left:236px;top:573px;width:99px;height:19px;background:#fff"></div>
<div style="left:236px;top:576px;width:99px;height:17px;line-height:17px;text-align:right;font-size:12.4px;color:#000;white-space:nowrap;padding-right:3px;box-sizing:border-box;">1,20</div>
<div style="left:335px;top:573px;width:81px;height:19px;background:#f2f2f2"></div>
<div style="left:335px;top:576px;width:81px;height:17px;line-height:17px;font-size:12.4px;color:#000;white-space:nowrap;padding-left:3px;box-sizing:border-box;">m</div>
<div style="left:42px;top:611px;width:194px;height:19px;background:#f2f2f2"></div>
<div style="left:42px;top:614px;width:194px;height:17px;line-height:17px;font-size:12.4px;color:#000;white-space:nowrap;padding-left:3px;box-sizing:border-box;">Taxa de percolação</div>
<div style="left:236px;top:611px;width:99px;height:19px;background:#fff"></div>
<div style="left:236px;top:614px;width:99px;height:17px;line-height:17px;text-align:right;font-size:12.4px;color:#000;white-space:nowrap;padding-right:3px;box-sizing:border-box;">80</div>
<div style="left:335px;top:611px;width:81px;height:19px;background:#f2f2f2"></div>
<div style="left:335px;top:614px;width:81px;height:17px;line-height:17px;font-size:12.4px;color:#000;white-space:nowrap;padding-left:3px;box-sizing:border-box;">min/m</div>
<div style="left:42px;top:630px;width:194px;height:19px;background:#f2f2f2"></div>
<div style="left:42px;top:633px;width:194px;height:17px;line-height:17px;font-size:12.4px;color:#000;white-space:nowrap;padding-left:3px;box-sizing:border-box;">Diâmetro interno (D<small>i</small>)</div>
<div style="left:236px;top:630px;width:99px;height:19px;background:#fff"></div>
<div style="left:236px;top:633px;width:99px;height:17px;line-height:17px;text-align:right;font-size:12.4px;color:#000;white-space:nowrap;padding-right:3px;box-sizing:border-box;">1,00</div>
<div style="left:335px;top:630px;width:81px;height:19px;background:#f2f2f2"></div>
<div style="left:335px;top:633px;width:81px;height:17px;line-height:17px;font-size:12.4px;color:#000;white-space:nowrap;padding-left:3px;box-sizing:border-box;">m</div>
<div style="left:42px;top:649px;width:194px;height:19px;background:#f2f2f2"></div>
<div style="left:42px;top:652px;width:194px;height:17px;line-height:17px;font-size:12.4px;color:#000;white-space:nowrap;padding-left:3px;box-sizing:border-box;">Altura útil (h<small>u</small>)</div>
<div style="left:236px;top:649px;width:99px;height:19px;background:#fff"></div>
<div style="left:236px;top:652px;width:99px;height:17px;line-height:17px;text-align:right;font-size:12.4px;color:#000;white-space:nowrap;padding-right:3px;box-sizing:border-box;">2,30</div>
<div style="left:335px;top:649px;width:81px;height:19px;background:#f2f2f2"></div>
<div style="left:335px;top:652px;width:81px;height:17px;line-height:17px;font-size:12.4px;color:#000;white-space:nowrap;padding-left:3px;box-sizing:border-box;">m</div>
<div style="left:42px;top:535px;width:374px;height:19px;background:#bdd7ee"></div>
<div style="left:42px;top:535px;width:374px;height:19px;line-height:19px;text-align:center;font-size:11.8px;color:#000;white-space:nowrap;font-weight:bold;">Filtro anaeróbio</div>
<div style="left:42px;top:592px;width:374px;height:19px;background:#bdd7ee"></div>
<div style="left:42px;top:592px;width:374px;height:19px;line-height:19px;text-align:center;font-size:11.8px;color:#000;white-space:nowrap;font-weight:bold;">Sumidouro</div>
<div style="left:42px;top:383px;width:374px;height:1px;background:#000"></div>
<div style="left:42px;top:402px;width:374px;height:1px;background:#000"></div>
<div style="left:42px;top:421px;width:374px;height:1px;background:#000"></div>
<div style="left:42px;top:440px;width:374px;height:1px;background:#000"></div>
<div style="left:42px;top:459px;width:374px;height:1px;background:#000"></div>
<div style="left:42px;top:478px;width:374px;height:1px;background:#000"></div>
<div style="left:42px;top:497px;width:374px;height:1px;background:#000"></div>
<div style="left:42px;top:516px;width:374px;height:1px;background:#000"></div>
<div style="left:42px;top:535px;width:374px;height:1px;background:#000"></div>
<div style="left:42px;top:554px;width:374px;height:1px;background:#000"></div>
<div style="left:42px;top:573px;width:374px;height:1px;background:#000"></div>
<div style="left:42px;top:592px;width:374px;height:1px;background:#000"></div>
<div style="left:42px;top:611px;width:374px;height:1px;background:#000"></div>
<div style="left:42px;top:630px;width:374px;height:1px;background:#000"></div>
<div style="left:42px;top:649px;width:374px;height:1px;background:#000"></div>
<div style="left:41px;top:325px;width:375px;height:2px;background:#000"></div>
<div style="left:41px;top:363px;width:375px;height:2px;background:#000"></div>
<div style="left:41px;top:382px;width:375px;height:2px;background:#000"></div>
<div style="left:41px;top:534px;width:375px;height:2px;background:#000"></div>
<div style="left:41px;top:553px;width:375px;height:2px;background:#000"></div>
<div style="left:41px;top:591px;width:375px;height:2px;background:#000"></div>
<div style="left:41px;top:610px;width:375px;height:2px;background:#000"></div>
<div style="left:41px;top:667px;width:375px;height:2px;background:#000"></div>
<div style="left:236px;top:383px;width:1px;height:19px;background:#000"></div>
<svg style="left:231px;top:384px" width="5" height="5"><path d="M0 0 L5 0 L5 5Z" fill="#f00"/></svg>
<div style="left:236px;top:402px;width:1px;height:19px;background:#000"></div>
<svg style="left:231px;top:403px" width="5" height="5"><path d="M0 0 L5 0 L5 5Z" fill="#f00"/></svg>
<div style="left:236px;top:421px;width:1px;height:19px;background:#000"></div>
<svg style="left:231px;top:422px" width="5" height="5"><path d="M0 0 L5 0 L5 5Z" fill="#f00"/></svg>
<div style="left:236px;top:440px;width:1px;height:19px;background:#000"></div>
<div style="left:335px;top:440px;width:1px;height:19px;background:#000"></div>
<svg style="left:231px;top:441px" width="5" height="5"><path d="M0 0 L5 0 L5 5Z" fill="#f00"/></svg>
<div style="left:236px;top:459px;width:1px;height:19px;background:#000"></div>
<div style="left:335px;top:459px;width:1px;height:19px;background:#000"></div>
<svg style="left:231px;top:460px" width="5" height="5"><path d="M0 0 L5 0 L5 5Z" fill="#f00"/></svg>
<div style="left:236px;top:478px;width:1px;height:19px;background:#000"></div>
<div style="left:335px;top:478px;width:1px;height:19px;background:#000"></div>
<svg style="left:231px;top:479px" width="5" height="5"><path d="M0 0 L5 0 L5 5Z" fill="#f00"/></svg>
<div style="left:236px;top:497px;width:1px;height:19px;background:#000"></div>
<div style="left:335px;top:497px;width:1px;height:19px;background:#000"></div>
<svg style="left:231px;top:498px" width="5" height="5"><path d="M0 0 L5 0 L5 5Z" fill="#f00"/></svg>
<div style="left:236px;top:516px;width:1px;height:19px;background:#000"></div>
<div style="left:335px;top:516px;width:1px;height:19px;background:#000"></div>
<svg style="left:231px;top:517px" width="5" height="5"><path d="M0 0 L5 0 L5 5Z" fill="#f00"/></svg>
<div style="left:236px;top:554px;width:1px;height:19px;background:#000"></div>
<div style="left:335px;top:554px;width:1px;height:19px;background:#000"></div>
<svg style="left:231px;top:555px" width="5" height="5"><path d="M0 0 L5 0 L5 5Z" fill="#f00"/></svg>
<div style="left:236px;top:573px;width:1px;height:19px;background:#000"></div>
<div style="left:335px;top:573px;width:1px;height:19px;background:#000"></div>
<svg style="left:231px;top:574px" width="5" height="5"><path d="M0 0 L5 0 L5 5Z" fill="#f00"/></svg>
<div style="left:236px;top:611px;width:1px;height:19px;background:#000"></div>
<div style="left:335px;top:611px;width:1px;height:19px;background:#000"></div>
<svg style="left:231px;top:612px" width="5" height="5"><path d="M0 0 L5 0 L5 5Z" fill="#f00"/></svg>
<div style="left:236px;top:630px;width:1px;height:19px;background:#000"></div>
<div style="left:335px;top:630px;width:1px;height:19px;background:#000"></div>
<svg style="left:231px;top:631px" width="5" height="5"><path d="M0 0 L5 0 L5 5Z" fill="#f00"/></svg>
<div style="left:236px;top:649px;width:1px;height:19px;background:#000"></div>
<div style="left:335px;top:649px;width:1px;height:19px;background:#000"></div>
<svg style="left:231px;top:650px" width="5" height="5"><path d="M0 0 L5 0 L5 5Z" fill="#f00"/></svg>
<div style="left:41px;top:325px;width:2px;height:344px;background:#000"></div>
<div style="left:414px;top:325px;width:2px;height:344px;background:#000"></div>
<svg style="left:410px;top:365px" width="5" height="5"><path d="M0 0 L5 0 L5 5Z" fill="#f00"/></svg>
<svg style="left:410px;top:536px" width="5" height="5"><path d="M0 0 L5 0 L5 5Z" fill="#f00"/></svg>
<svg style="left:410px;top:593px" width="5" height="5"><path d="M0 0 L5 0 L5 5Z" fill="#f00"/></svg>
<div style="left:473px;top:459px;width:323px;height:38px;background:#5b9bd5"></div>
<div style="left:473px;top:459px;width:323px;height:38px;line-height:38px;text-align:center;font-size:15.5px;color:#000;white-space:nowrap;font-weight:bold;">Saída de dados</div>
<div style="left:473px;top:497px;width:323px;height:19px;background:#bdd7ee"></div>
<div style="left:473px;top:497px;width:323px;height:19px;line-height:19px;text-align:center;font-size:11.8px;color:#000;white-space:nowrap;font-weight:bold;">Fossa séptica</div>
<div style="left:473px;top:554px;width:323px;height:19px;background:#bdd7ee"></div>
<div style="left:473px;top:554px;width:323px;height:19px;line-height:19px;text-align:center;font-size:11.8px;color:#000;white-space:nowrap;font-weight:bold;">Filtro anaeróbio</div>
<div style="left:473px;top:611px;width:323px;height:19px;background:#bdd7ee"></div>
<div style="left:473px;top:611px;width:323px;height:19px;line-height:19px;text-align:center;font-size:11.8px;color:#000;white-space:nowrap;font-weight:bold;">Sumidouro</div>
<div style="left:473px;top:516px;width:206px;height:19px;background:#f2f2f2"></div>
<div style="left:473px;top:519px;width:206px;height:17px;line-height:17px;font-size:12.4px;color:#000;white-space:nowrap;padding-left:3px;box-sizing:border-box;">Volume útil necessário</div>
<div style="left:679px;top:516px;width:58px;height:19px;background:#fff"></div>
<div style="left:679px;top:519px;width:58px;height:17px;line-height:17px;text-align:right;font-size:12.4px;color:#000;white-space:nowrap;padding-right:3px;box-sizing:border-box;">3,70</div>
<div style="left:737px;top:516px;width:59px;height:19px;background:#f2f2f2"></div>
<div style="left:737px;top:519px;width:59px;height:17px;line-height:17px;font-size:12.4px;color:#000;white-space:nowrap;padding-left:3px;box-sizing:border-box;">m³</div>
<div style="left:473px;top:516px;width:323px;height:1px;background:#000"></div>
<div style="left:679px;top:516px;width:1px;height:19px;background:#000"></div>
<div style="left:737px;top:516px;width:1px;height:19px;background:#000"></div>
<svg style="left:674px;top:517px" width="5" height="5"><path d="M0 0 L5 0 L5 5Z" fill="#f00"/></svg>
<div style="left:473px;top:535px;width:206px;height:19px;background:#f2f2f2"></div>
<div style="left:473px;top:538px;width:206px;height:17px;line-height:17px;font-size:12.4px;color:#000;white-space:nowrap;padding-left:3px;box-sizing:border-box;">Volume útil adotado</div>
<div style="left:679px;top:535px;width:58px;height:19px;background:#fff"></div>
<div style="left:679px;top:538px;width:58px;height:17px;line-height:17px;text-align:right;font-size:12.4px;color:#000;white-space:nowrap;padding-right:3px;box-sizing:border-box;">3,75</div>
<div style="left:737px;top:535px;width:59px;height:19px;background:#f2f2f2"></div>
<div style="left:737px;top:538px;width:59px;height:17px;line-height:17px;font-size:12.4px;color:#000;white-space:nowrap;padding-left:3px;box-sizing:border-box;">m³</div>
<div style="left:473px;top:535px;width:323px;height:1px;background:#000"></div>
<div style="left:679px;top:535px;width:1px;height:19px;background:#000"></div>
<div style="left:737px;top:535px;width:1px;height:19px;background:#000"></div>
<svg style="left:674px;top:536px" width="5" height="5"><path d="M0 0 L5 0 L5 5Z" fill="#f00"/></svg>
<div style="left:473px;top:573px;width:206px;height:19px;background:#f2f2f2"></div>
<div style="left:473px;top:576px;width:206px;height:17px;line-height:17px;font-size:12.4px;color:#000;white-space:nowrap;padding-left:3px;box-sizing:border-box;">Volume útil necessário</div>
<div style="left:679px;top:573px;width:58px;height:19px;background:#fff"></div>
<div style="left:679px;top:576px;width:58px;height:17px;line-height:17px;text-align:right;font-size:12.4px;color:#000;white-space:nowrap;padding-right:3px;box-sizing:border-box;">1,79</div>
<div style="left:737px;top:573px;width:59px;height:19px;background:#f2f2f2"></div>
<div style="left:737px;top:576px;width:59px;height:17px;line-height:17px;font-size:12.4px;color:#000;white-space:nowrap;padding-left:3px;box-sizing:border-box;">m³</div>
<div style="left:473px;top:573px;width:323px;height:1px;background:#000"></div>
<div style="left:679px;top:573px;width:1px;height:19px;background:#000"></div>
<div style="left:737px;top:573px;width:1px;height:19px;background:#000"></div>
<svg style="left:674px;top:574px" width="5" height="5"><path d="M0 0 L5 0 L5 5Z" fill="#f00"/></svg>
<div style="left:473px;top:592px;width:206px;height:19px;background:#f2f2f2"></div>
<div style="left:473px;top:595px;width:206px;height:17px;line-height:17px;font-size:12.4px;color:#000;white-space:nowrap;padding-left:3px;box-sizing:border-box;">Volume útil adotado</div>
<div style="left:679px;top:592px;width:58px;height:19px;background:#fff"></div>
<div style="left:679px;top:595px;width:58px;height:17px;line-height:17px;text-align:right;font-size:12.4px;color:#000;white-space:nowrap;padding-right:3px;box-sizing:border-box;">2,12</div>
<div style="left:737px;top:592px;width:59px;height:19px;background:#f2f2f2"></div>
<div style="left:737px;top:595px;width:59px;height:17px;line-height:17px;font-size:12.4px;color:#000;white-space:nowrap;padding-left:3px;box-sizing:border-box;">m³</div>
<div style="left:473px;top:592px;width:323px;height:1px;background:#000"></div>
<div style="left:679px;top:592px;width:1px;height:19px;background:#000"></div>
<div style="left:737px;top:592px;width:1px;height:19px;background:#000"></div>
<svg style="left:674px;top:593px" width="5" height="5"><path d="M0 0 L5 0 L5 5Z" fill="#f00"/></svg>
<div style="left:473px;top:630px;width:206px;height:19px;background:#f2f2f2"></div>
<div style="left:473px;top:633px;width:206px;height:17px;line-height:17px;font-size:12.4px;color:#000;white-space:nowrap;padding-left:3px;box-sizing:border-box;">Área de infiltração necessária</div>
<div style="left:679px;top:630px;width:58px;height:19px;background:#fff"></div>
<div style="left:679px;top:633px;width:58px;height:17px;line-height:17px;text-align:right;font-size:12.4px;color:#000;white-space:nowrap;padding-right:3px;box-sizing:border-box;">7,79</div>
<div style="left:737px;top:630px;width:59px;height:19px;background:#f2f2f2"></div>
<div style="left:737px;top:633px;width:59px;height:17px;line-height:17px;font-size:12.4px;color:#000;white-space:nowrap;padding-left:3px;box-sizing:border-box;">m²</div>
<div style="left:473px;top:630px;width:323px;height:1px;background:#000"></div>
<div style="left:679px;top:630px;width:1px;height:19px;background:#000"></div>
<div style="left:737px;top:630px;width:1px;height:19px;background:#000"></div>
<svg style="left:674px;top:631px" width="5" height="5"><path d="M0 0 L5 0 L5 5Z" fill="#f00"/></svg>
<div style="left:473px;top:649px;width:206px;height:19px;background:#f2f2f2"></div>
<div style="left:473px;top:652px;width:206px;height:17px;line-height:17px;font-size:12.4px;color:#000;white-space:nowrap;padding-left:3px;box-sizing:border-box;">Área de infiltração adotada</div>
<div style="left:679px;top:649px;width:58px;height:19px;background:#fff"></div>
<div style="left:679px;top:652px;width:58px;height:17px;line-height:17px;text-align:right;font-size:12.4px;color:#000;white-space:nowrap;padding-right:3px;box-sizing:border-box;">8,01</div>
<div style="left:737px;top:649px;width:59px;height:19px;background:#f2f2f2"></div>
<div style="left:737px;top:652px;width:59px;height:17px;line-height:17px;font-size:12.4px;color:#000;white-space:nowrap;padding-left:3px;box-sizing:border-box;">m²</div>
<div style="left:473px;top:649px;width:323px;height:1px;background:#000"></div>
<div style="left:679px;top:649px;width:1px;height:19px;background:#000"></div>
<div style="left:737px;top:649px;width:1px;height:19px;background:#000"></div>
<svg style="left:674px;top:650px" width="5" height="5"><path d="M0 0 L5 0 L5 5Z" fill="#f00"/></svg>
<div style="left:472px;top:458px;width:324px;height:2px;background:#000"></div>
<div style="left:472px;top:496px;width:324px;height:2px;background:#000"></div>
<div style="left:472px;top:515px;width:324px;height:2px;background:#000"></div>
<div style="left:472px;top:553px;width:324px;height:2px;background:#000"></div>
<div style="left:472px;top:572px;width:324px;height:2px;background:#000"></div>
<div style="left:472px;top:610px;width:324px;height:2px;background:#000"></div>
<div style="left:472px;top:629px;width:324px;height:2px;background:#000"></div>
<div style="left:472px;top:667px;width:324px;height:2px;background:#000"></div>
<div style="left:472px;top:458px;width:2px;height:211px;background:#000"></div>
<div style="left:794px;top:458px;width:2px;height:211px;background:#000"></div>
<div style="left:853px;top:459px;width:443px;height:38px;background:#5b9bd5"></div>
<div style="left:853px;top:459px;width:443px;height:38px;line-height:38px;text-align:center;font-size:15.5px;color:#000;white-space:nowrap;font-weight:bold;">Verificações</div>
<div style="left:939px;top:497px;width:277px;height:19px;background:#f2f2f2"></div>
<div style="left:939px;top:500px;width:277px;height:17px;line-height:17px;text-align:center;font-size:12.4px;color:#000;white-space:nowrap;">Vol. útil adotado ≥ Vol. útil necessário</div>
<div style="left:1216px;top:497px;width:80px;height:19px;background:#fff"></div>
<div style="left:1216px;top:500px;width:80px;height:17px;line-height:17px;text-align:center;font-size:11px;color:#000;white-space:nowrap;">OK</div>
<div style="left:939px;top:497px;width:357px;height:1px;background:#000"></div>
<svg style="left:1211px;top:498px" width="5" height="5"><path d="M0 0 L5 0 L5 5Z" fill="#f00"/></svg>
<div style="left:939px;top:516px;width:277px;height:19px;background:#f2f2f2"></div>
<div style="left:939px;top:519px;width:277px;height:17px;line-height:17px;text-align:center;font-size:12.4px;color:#000;white-space:nowrap;">Largura interna (W) ≥ 0,80m</div>
<div style="left:1216px;top:516px;width:80px;height:19px;background:#fff"></div>
<div style="left:1216px;top:519px;width:80px;height:17px;line-height:17px;text-align:center;font-size:11px;color:#000;white-space:nowrap;">OK</div>
<div style="left:939px;top:516px;width:357px;height:1px;background:#000"></div>
<svg style="left:1211px;top:517px" width="5" height="5"><path d="M0 0 L5 0 L5 5Z" fill="#f00"/></svg>
<div style="left:939px;top:535px;width:277px;height:19px;background:#f2f2f2"></div>
<div style="left:939px;top:538px;width:277px;height:17px;line-height:17px;text-align:center;font-size:12.4px;color:#000;white-space:nowrap;">2 ≤ L/W ≤ 4</div>
<div style="left:1216px;top:535px;width:80px;height:19px;background:#fff"></div>
<div style="left:1216px;top:538px;width:80px;height:17px;line-height:17px;text-align:center;font-size:11px;color:#000;white-space:nowrap;">OK</div>
<div style="left:939px;top:535px;width:357px;height:1px;background:#000"></div>
<svg style="left:1211px;top:536px" width="5" height="5"><path d="M0 0 L5 0 L5 5Z" fill="#f00"/></svg>
<div style="left:939px;top:554px;width:277px;height:19px;background:#f2f2f2"></div>
<div style="left:939px;top:557px;width:277px;height:17px;line-height:17px;text-align:center;font-size:12.4px;color:#000;white-space:nowrap;">1,2m ≤ Altura útil (h<small>u</small>) ≤ 2,2m</div>
<div style="left:1216px;top:554px;width:80px;height:19px;background:#fff"></div>
<div style="left:1216px;top:557px;width:80px;height:17px;line-height:17px;text-align:center;font-size:11px;color:#000;white-space:nowrap;">OK</div>
<div style="left:939px;top:554px;width:357px;height:1px;background:#000"></div>
<svg style="left:1211px;top:555px" width="5" height="5"><path d="M0 0 L5 0 L5 5Z" fill="#f00"/></svg>
<div style="left:939px;top:573px;width:277px;height:19px;background:#f2f2f2"></div>
<div style="left:939px;top:576px;width:277px;height:17px;line-height:17px;text-align:center;font-size:12.4px;color:#000;white-space:nowrap;">Vol. útil adotado ≥ Vol. útil necessário</div>
<div style="left:1216px;top:573px;width:80px;height:19px;background:#fff"></div>
<div style="left:1216px;top:576px;width:80px;height:17px;line-height:17px;text-align:center;font-size:11px;color:#000;white-space:nowrap;">OK</div>
<div style="left:939px;top:573px;width:357px;height:1px;background:#000"></div>
<svg style="left:1211px;top:574px" width="5" height="5"><path d="M0 0 L5 0 L5 5Z" fill="#f00"/></svg>
<div style="left:939px;top:592px;width:277px;height:19px;background:#f2f2f2"></div>
<div style="left:939px;top:595px;width:277px;height:17px;line-height:17px;text-align:center;font-size:12.4px;color:#000;white-space:nowrap;">Vol. útil adotado ≥ 1m³</div>
<div style="left:1216px;top:592px;width:80px;height:19px;background:#fff"></div>
<div style="left:1216px;top:595px;width:80px;height:17px;line-height:17px;text-align:center;font-size:11px;color:#000;white-space:nowrap;">OK</div>
<div style="left:939px;top:592px;width:357px;height:1px;background:#000"></div>
<svg style="left:1211px;top:593px" width="5" height="5"><path d="M0 0 L5 0 L5 5Z" fill="#f00"/></svg>
<div style="left:939px;top:611px;width:277px;height:19px;background:#f2f2f2"></div>
<div style="left:939px;top:614px;width:277px;height:17px;line-height:17px;text-align:center;font-size:12.4px;color:#000;white-space:nowrap;">Altura útil (h<small>u</small>) ≥ 1,20m</div>
<div style="left:1216px;top:611px;width:80px;height:19px;background:#fff"></div>
<div style="left:1216px;top:614px;width:80px;height:17px;line-height:17px;text-align:center;font-size:11px;color:#000;white-space:nowrap;">OK</div>
<div style="left:939px;top:611px;width:357px;height:1px;background:#000"></div>
<svg style="left:1211px;top:612px" width="5" height="5"><path d="M0 0 L5 0 L5 5Z" fill="#f00"/></svg>
<div style="left:939px;top:630px;width:277px;height:19px;background:#f2f2f2"></div>
<div style="left:939px;top:633px;width:277px;height:17px;line-height:17px;text-align:center;font-size:12.4px;color:#000;white-space:nowrap;">Área infilt. adotada ≥ Área infilt. necessária</div>
<div style="left:1216px;top:630px;width:80px;height:19px;background:#fff"></div>
<div style="left:1216px;top:633px;width:80px;height:17px;line-height:17px;text-align:center;font-size:11px;color:#000;white-space:nowrap;">OK</div>
<div style="left:939px;top:630px;width:357px;height:1px;background:#000"></div>
<svg style="left:1211px;top:631px" width="5" height="5"><path d="M0 0 L5 0 L5 5Z" fill="#f00"/></svg>
<div style="left:939px;top:649px;width:277px;height:19px;background:#f2f2f2"></div>
<div style="left:939px;top:652px;width:277px;height:17px;line-height:17px;text-align:center;font-size:12.4px;color:#000;white-space:nowrap;">Diâmetro interno (D<small>i</small>) ≥ 1,00m</div>
<div style="left:1216px;top:649px;width:80px;height:19px;background:#fff"></div>
<div style="left:1216px;top:652px;width:80px;height:17px;line-height:17px;text-align:center;font-size:11px;color:#000;white-space:nowrap;">OK</div>
<div style="left:939px;top:649px;width:357px;height:1px;background:#000"></div>
<svg style="left:1211px;top:650px" width="5" height="5"><path d="M0 0 L5 0 L5 5Z" fill="#f00"/></svg>
<div style="left:853px;top:497px;width:86px;height:76px;background:#bdd7ee"></div>
<div style="left:853px;top:573px;width:86px;height:57px;background:#bdd7ee"></div>
<div style="left:853px;top:630px;width:86px;height:38px;background:#bdd7ee"></div>
<div style="left:853px;top:516.5px;width:86px;font-size:11.8px;font-weight:bold;line-height:19px;text-align:center">Fossa<br>séptica</div>
<div style="left:853px;top:583.5px;width:86px;font-size:11.8px;font-weight:bold;line-height:19px;text-align:center">Filtro<br>anaeróbio</div>
<div style="left:853px;top:630px;width:86px;height:38px;line-height:38px;text-align:center;font-size:12.4px;font-weight:bold">Sumidouro</div>
<div style="left:852px;top:458px;width:444px;height:2px;background:#000"></div>
<div style="left:852px;top:496px;width:444px;height:2px;background:#000"></div>
<div style="left:852px;top:572px;width:444px;height:2px;background:#000"></div>
<div style="left:852px;top:629px;width:444px;height:2px;background:#000"></div>
<div style="left:852px;top:667px;width:444px;height:2px;background:#000"></div>
<div style="left:852px;top:458px;width:2px;height:211px;background:#000"></div>
<div style="left:1295px;top:458px;width:2px;height:211px;background:#000"></div>
<div style="left:938px;top:497px;width:2px;height:171px;background:#000"></div>
<div style="left:1215px;top:497px;width:2px;height:171px;background:#000"></div>
<div style="left:235px;top:382px;width:181px;height:22px;border:2px solid #217346;box-sizing:border-box"></div>
<div style="left:412px;top:399px;width:7px;height:7px;background:#fff"></div>
<div style="left:413px;top:400px;width:5px;height:5px;background:#217346"></div>
<div style="left:416px;top:384px;width:17px;height:17px;background:#f3f4f7;border:1px solid #b4b8c2;box-sizing:border-box"></div>
<svg style="left:421px;top:391px" width="8" height="5"><path d="M0 0 L7 0 L3.5 4Z" fill="#666"/></svg>
<div style="left:1345px;top:189px;width:21px;height:489px;background:#fff"></div>
<div style="left:1348px;top:191px;width:15px;height:15px;background:#fff;border:1px solid #ababab;box-sizing:border-box"></div>
<svg style="left:1351px;top:196px" width="9" height="5"><path d="M0 5 L4.5 0 L9 5Z" fill="#777"/></svg>
<div style="left:1348px;top:206px;width:15px;height:30px;background:#fff;border:1px solid #ababab;box-sizing:border-box"></div>
<div style="left:1348px;top:236px;width:15px;height:428px;background:#f0f0f0"></div>
<div style="left:1348px;top:664px;width:15px;height:14px;background:#fff;border:1px solid #ababab;box-sizing:border-box"></div>
<svg style="left:1351px;top:669px" width="9" height="5"><path d="M0 0 L4.5 5 L9 0Z" fill="#777"/></svg>
<div style="left:1344px;top:205px;width:1px;height:473px;background:#ababab"></div>
<div style="left:0px;top:678px;width:1366px;height:28px;background:#f5f5f5"></div>
<div style="left:0px;top:678px;width:101px;height:1px;background:#ababab"></div>
<svg style="left:26px;top:688px" width="40" height="10"><path d="M5 1 L1 5 L5 9Z" fill="#bbb"/><path d="M32 1 L36 5 L32 9Z" fill="#bbb"/></svg>
<div style="left:100px;top:678px;width:182px;height:25px;background:#fff;border:1px solid #ababab;border-top:none;border-bottom:none;box-sizing:border-box"></div>
<div style="left:100px;top:701px;width:182px;height:2px;background:#217346"></div>
<div style="left:100px;top:680px;width:182px;height:24px;line-height:24px;text-align:center;color:#217346;font-size:12.8px;font-weight:bold">Fossa, Filtro e Sumidouro</div>
<div style="left:282px;top:678px;width:1062px;height:1px;background:#ababab"></div>
<div style="left:297px;top:680px;height:24px;line-height:24px;color:#444;font-size:13px">Memorial de Cálculo</div>
<div style="left:432px;top:684px;width:1px;height:16px;background:#c6c6c6"></div>
<svg style="left:465px;top:683px" width="16" height="16"><circle cx="8" cy="8" r="7" fill="none" stroke="#666" stroke-width="1.3"/><path d="M8 4 V12 M4 8 H12" stroke="#666" stroke-width="1.5"/></svg>
<svg style="left:818px;top:686px" width="4" height="12"><circle cx="2" cy="2" r="0.9" fill="#999"/><circle cx="2" cy="6" r="0.9" fill="#999"/><circle cx="2" cy="10" r="0.9" fill="#999"/></svg>
<div style="left:836px;top:684px;width:509px;height:16px;background:#e8e8e8"></div>
<div style="left:836px;top:684px;width:16px;height:16px;background:#fff;border:1px solid #ababab;box-sizing:border-box"></div>
<svg style="left:841px;top:688px" width="6" height="9"><path d="M5 0 L0 4.5 L5 9Z" fill="#555"/></svg>
<div style="left:852px;top:684px;width:97px;height:16px;background:#fff;border:1px solid #ababab;box-sizing:border-box"></div>
<div style="left:1329px;top:684px;width:16px;height:16px;background:#fff;border:1px solid #ababab;box-sizing:border-box"></div>
<svg style="left:1335px;top:688px" width="6" height="9"><path d="M0 0 L5 4.5 L0 9Z" fill="#555"/></svg>
<div style="left:0px;top:706px;width:1366px;height:22px;background:#217346"></div>
<div style="left:8px;top:706px;height:22px;line-height:22px;color:#fff;font-size:10.4px">PRONTO</div>
<svg style="left:70px;top:710px" width="14" height="14"><circle cx="3.5" cy="3.5" r="2.5" fill="#fff"/><rect x="1" y="6" width="12" height="7" fill="#fff"/><g fill="#217346"><rect x="3" y="8" width="2" height="1.5"/><rect x="6" y="8" width="2" height="1.5"/><rect x="9" y="8" width="2" height="1.5"/><rect x="3" y="10.5" width="2" height="1.5"/><rect x="6" y="10.5" width="2" height="1.5"/><rect x="9" y="10.5" width="2" height="1.5"/></g><rect x="6" y="2" width="7" height="3" fill="#fff"/></svg>
<div style="left:1080px;top:706px;width:38px;height:22px;background:#0c6532"></div>
<svg style="left:1080px;top:704px" width="286" height="26" viewBox="1080 704 286 26">
<g fill="none" stroke="#fff" stroke-width="1">
<rect x="1092.5" y="710.5" width="12" height="12"/><path d="M1092.5 714.5 H1104.5 M1092.5 718.5 H1104.5 M1096.5 710.5 V722.5 M1100.5 710.5 V722.5"/>
<rect x="1130.5" y="710.5" width="13" height="12"/><rect x="1133.5" y="712.5" width="7" height="8"/><path d="M1135 715 H1139 M1135 717 H1139"/>
<rect x="1168.5" y="710.5" width="13" height="12"/></g>
<rect x="1169" y="711" width="3.5" height="7" fill="#fff"/><rect x="1173.5" y="711" width="3.5" height="5" fill="#fff"/>
<rect x="1199" y="716" width="7" height="2" fill="#fff"/><rect x="1209" y="716.5" width="98" height="1" fill="#fff"/><rect x="1251.5" y="711" width="4" height="11" fill="#fff"/><rect x="1258" y="714" width="1" height="5" fill="#fff"/>
<path d="M1312 717 H1321 M1316.5 712.5 V721.5" stroke="#fff" stroke-width="2"/>
</svg>
<div style="left:1337px;top:706px;height:22px;line-height:22px;color:#fff;font-size:10.5px">90%</div>
<div style="left:0;top:728px;width:1366px;height:40px;background:linear-gradient(90deg,#ebe5b5 0px,#e9e2c0 48px,#e6ddcc 335px,#e4dfd4 500px,#e6e1d1 700px,#e9e7bf 850px,#ece8ab 1000px,#ede9a8 1366px)"></div>
<svg style="left:16px;top:739px" width="18" height="18"><path d="M0 2.5 L7.5 1.4 V8.5 H0Z M8.5 1.3 L18 0 V8.5 H8.5Z M0 9.5 H7.5 V16.6 L0 15.5Z M8.5 9.5 H18 V18 L8.5 16.7Z" fill="#111"/></svg>
<div style="left:48px;top:728px;width:287px;height:40px;background:#fff;border-bottom:1px solid #ccc;box-sizing:border-box"></div>
<svg style="left:58px;top:738px" width="20" height="20"><circle cx="11" cy="8" r="6" fill="none" stroke="#222" stroke-width="1.5"/><path d="M7 12 L1 18" stroke="#222" stroke-width="1.8"/></svg>
<div style="left:88px;top:737px;height:22px;line-height:22px;color:#222;font-size:13.6px">Pesquisar</div>
<svg style="left:262px;top:730px" width="66" height="36" viewBox="0 0 66 36">
<path d="M26 4 Q28 16 40 18 Q28 20 26 32 Q24 20 12 18 Q24 16 26 4Z" fill="#f5b81c"/>
<path d="M47 14 Q48 20 54 21 Q48 22 47 28 Q46 22 40 21 Q46 20 47 14Z" fill="#f5c33b"/>
<path d="M8 20 Q9 24 11 25 Q9 26 8 30 Q7 26 4 25 Q7 24 8 20Z" fill="#1aa7ec"/><circle cx="41" cy="6" r="1.5" fill="#e06030"/><circle cx="60" cy="26" r="1.5" fill="#5ab04a"/>
</svg>
<svg style="left:340px;top:730px" width="400" height="36" viewBox="340 730 400 36">
<defs>
<linearGradient id="cpA" x1="0" y1="0" x2="0" y2="1"><stop offset="0" stop-color="#1e90f0"/><stop offset="0.55" stop-color="#3cc87a"/><stop offset="1" stop-color="#f2c81a"/></linearGradient>
<linearGradient id="cpB" x1="0" y1="0" x2="0" y2="1"><stop offset="0" stop-color="#a855e8"/><stop offset="0.6" stop-color="#f0508a"/><stop offset="1" stop-color="#f7a040"/></linearGradient>
<linearGradient id="edg" x1="0" y1="1" x2="1" y2="0"><stop offset="0" stop-color="#0c59a4"/><stop offset="0.55" stop-color="#1e9ae0"/><stop offset="1" stop-color="#5fd96a"/></linearGradient>
<linearGradient id="mlb" x1="0" y1="0" x2="1" y2="1"><stop offset="0" stop-color="#1c8ce0"/><stop offset="1" stop-color="#40c0f0"/></linearGradient>
</defs>
<g fill="none" stroke="#111" stroke-width="1.2">
<path d="M352.5 741 V740.5 H357 V743 M352.5 740.5 H363.5 V743"/><rect x="352.5" y="743.5" width="11" height="8"/><path d="M352.5 754.5 V752 M352.5 754.5 H363.5 V752"/>
<path d="M366.5 740 V742.5 M366.5 747 V755"/></g><rect x="365.5" y="743" width="2.5" height="2.5" fill="#111"/>
<path d="M404 738 Q406 736 409 736 H414 Q417 736 416 740 L410 756 Q409 758 406 758 H402 Q399 758 400 755 L401 752 Q399 752 400 749Z" fill="url(#cpA)"/>
<path d="M413 741 Q414 739 417 739 H420 Q423 739 422 742 L418 755 Q417 758 414 758 H406 Q403 758 405 755 L410 745Z" fill="url(#cpB)"/>
<circle cx="459.5" cy="747.8" r="12" fill="url(#edg)"/>
<path d="M450 751 Q451 742 459 741.5 Q467 741.5 468 748 H455.5 Q456 753 462 754 Q466 754.5 470 752 Q467 759 460 759.5 Q452 759.5 450 751Z" fill="#fff" opacity="0.9"/>
<path d="M455.5 748 Q456 744 460 744 Q464 744 464.5 748Z" fill="#2aa0d8"/>
<path d="M497.5 741 Q497.5 739 499.5 739 H504 L506 741 H519.5 V757 H497.5Z" fill="#e9ae22"/>
<rect x="497.5" y="744" width="22" height="13" fill="#fbd45a"/>
<path d="M503 757 V749 H514 V757 H510.5 V752.5 H506.5 V757Z" fill="#2f86d6"/>
<rect x="547" y="736.6" width="21.6" height="21.2" rx="3.5" fill="#b30b00"/>
<path d="M551 753.5 Q553 749 557 748 Q561 747 565 749.5 Q561 750.5 557.5 746 Q556 743 557.5 740 Q559 743 556.5 749 Q554.5 753 551 753.5Z" fill="none" stroke="#fff" stroke-width="1.3"/>
<path d="M595 743 L607 736.6 L619 743 V758.5 H595Z" fill="#0f5cb0"/>
<path d="M598 743.5 H616 L607 750Z" fill="#fff"/>
<path d="M595 744 L607 752 L619 744 V758.5 H595Z" fill="url(#mlb)"/>
<circle cx="656" cy="748" r="12" fill="#db4437"/><path d="M656 748 L666.4 742 A12 12 0 0 1 656 760Z" fill="#f4c20d"/><path d="M656 748 L656 760 A12 12 0 0 1 645.6 742Z" fill="#0f9d58"/><circle cx="656" cy="748" r="5.5" fill="#fff"/><circle cx="656" cy="748" r="4.3" fill="#4285f4"/>
<g transform="translate(694,737)"><rect x="6" y="3" width="16" height="19" fill="#fff" stroke="#2b5797"/><path d="M9 7 H19 M9 10 H19 M9 13 H19 M9 16 H19" stroke="#2b5797"/><rect x="0" y="5" width="13" height="15" fill="#2b5797"/><text x="2" y="17" font-size="11" font-weight="bold" fill="#fff" font-family="Liberation Sans">W</text></g>
</svg>
<div style="left:730px;top:728px;width:48px;height:40px;background:#eef0dc"></div>
<div style="left:730px;top:766px;width:48px;height:2px;background:#0078d4"></div>
<svg style="left:742px;top:737px" width="26" height="24" viewBox="0 0 26 24">
<rect x="9" y="3" width="16" height="19" fill="#fff" stroke="#217346"/><path d="M12 7 H23 M12 11 H23 M12 15 H23 M12 19 H23 M17 3 V22" stroke="#217346"/>
<rect x="0" y="5" width="13" height="15" fill="#217346"/><text x="2.5" y="17" font-size="11" font-weight="bold" fill="#fff" font-family="Liberation Sans">X</text>
</svg>
<svg style="left:943px;top:735px" width="30" height="26" viewBox="0 0 30 26">
<path d="M15 1 L29 25 H1Z" fill="#f4c325"/><path d="M8 13 Q13 10 17 13 Q21 15 22 12 M7 17 H22 Q24 17 23 20 M9 21 H16" fill="none" stroke="#6b4d00" stroke-width="1.3"/>
</svg>
<div style="left:977px;top:737px;height:22px;line-height:22px;color:#222;font-size:13.4px">Vendaval aviso</div>
<svg style="left:1090px;top:737px" width="120" height="22" viewBox="0 0 120 22">
<path d="M3 14 L8 8 L13 14" stroke="#222" stroke-width="1.5" fill="none"/>
<g fill="none" stroke="#222" stroke-width="1.3"><rect x="27" y="8" width="12" height="8"/><path d="M24 10 V14 M30 6 V8"/>
<rect x="51" y="5" width="9" height="12" rx="3"/><path d="M48 9 V13 M63 9 V13"/>
<path d="M76 17 A10 10 0 0 1 86 7 M79 17 A7 7 0 0 1 86 10 M82 17 A4 4 0 0 1 86 13"/>
<path d="M96 9 H99 L103 5 V17 L99 13 H96Z M106 8 Q108 11 106 14 M108 6 Q111 11 108 16"/></g>
</svg>
<div style="left:1208px;top:731px;width:36px;height:17px;line-height:17px;text-align:center;color:#222;font-size:11px">POR</div>
<div style="left:1208px;top:748px;width:36px;height:17px;line-height:17px;text-align:center;color:#222;font-size:11px">PTB2</div>
<div style="left:1238px;top:731px;width:80px;height:17px;line-height:17px;text-align:center;color:#222;font-size:11.2px">14:31</div>
<div style="left:1238px;top:748px;width:80px;height:17px;line-height:17px;text-align:center;color:#222;font-size:11.2px">10/09/2024</div>
<svg style="left:1324px;top:737px" width="28" height="26" viewBox="0 0 28 26">
<path d="M1 1 H20 V14 H8 L4 18 V14 H1Z" fill="#222"/><path d="M4 5 H17 M4 9 H14" stroke="#fff" stroke-width="1.3"/>
<circle cx="19" cy="17" r="7" fill="#666" stroke="#fff"/><text x="16" y="21" font-size="10" fill="#fff" font-family="Liberation Sans">1</text>
</svg>
<svg style="left:0px;top:0px" width="1366" height="768" viewBox="0 0 1366 768">
<defs>
<pattern id="brk" patternUnits="userSpaceOnUse" x="0" y="0" width="11" height="6">
<rect width="11" height="6" fill="#585450"/>
<rect y="0" width="11" height="1.1" fill="#8e5630"/>
<rect x="0" y="0" width="0.8" height="6" fill="#8e5630"/><rect x="5.2" y="0" width="0.8" height="6" fill="#8e5630"/>
<g fill="#f2f2f2"><rect x="1.3" y="1.6" width="1.5" height="1.4"/><rect x="3.5" y="1.6" width="1.4" height="1.4"/><rect x="6.5" y="1.6" width="1.5" height="1.4"/><rect x="8.7" y="1.6" width="1.4" height="1.4"/>
<rect x="1.3" y="4" width="1.5" height="1.4"/><rect x="3.5" y="4" width="1.4" height="1.4"/><rect x="6.5" y="4" width="1.5" height="1.4"/><rect x="8.7" y="4" width="1.4" height="1.4"/></g>
</pattern>
<pattern id="obrk" patternUnits="userSpaceOnUse" x="0" y="256.5" width="12" height="5.9">
<rect width="12" height="5.9" fill="#8a6a58"/>
<rect x="0" y="0.2" width="12" height="4.4" fill="#e4742a"/><rect x="0" y="1.6" width="12" height="0.6" fill="#f09050"/>
</pattern>
<pattern id="grv" patternUnits="userSpaceOnUse" x="0" y="0" width="4.6" height="4.6">
<rect width="4.6" height="4.6" fill="#a4a4a4"/>
<circle cx="3.4" cy="1.1" r="0.9" fill="#3a3a3a"/><circle cx="1.1" cy="3.4" r="0.9" fill="#444"/>
<circle cx="1.1" cy="1.1" r="1" fill="#fafafa"/><circle cx="3.4" cy="3.4" r="1" fill="#f0f0f0"/>
</pattern>
<pattern id="dots" patternUnits="userSpaceOnUse" x="1061.2" y="302" width="7.1" height="14.2">
<circle cx="5.4" cy="3.6" r="1.25" fill="#dadada" stroke="#8a8a8a" stroke-width="0.6"/><circle cx="1.8" cy="10.9" r="1.25" fill="#dadada" stroke="#8a8a8a" stroke-width="0.6"/>
</pattern>
<pattern id="brk1" patternUnits="userSpaceOnUse" x="550.0" y="0" width="11" height="6">
<rect width="11" height="6" fill="#585450"/>
<rect y="0" width="11" height="1.1" fill="#8e5630"/>
<rect x="0" y="0" width="0.8" height="6" fill="#8e5630"/><rect x="5.2" y="0" width="0.8" height="6" fill="#8e5630"/>
<g fill="#f2f2f2"><rect x="1.3" y="1.6" width="1.5" height="1.4"/><rect x="3.5" y="1.6" width="1.4" height="1.4"/><rect x="6.5" y="1.6" width="1.5" height="1.4"/><rect x="8.7" y="1.6" width="1.4" height="1.4"/>
<rect x="1.3" y="4" width="1.5" height="1.4"/><rect x="3.5" y="4" width="1.4" height="1.4"/><rect x="6.5" y="4" width="1.5" height="1.4"/><rect x="8.7" y="4" width="1.4" height="1.4"/></g>
</pattern>
<pattern id="brk2" patternUnits="userSpaceOnUse" x="550.0" y="0" width="11" height="6">
<rect width="11" height="6" fill="#585450"/>
<rect y="0" width="11" height="1.1" fill="#8e5630"/>
<rect x="0" y="0" width="0.8" height="6" fill="#8e5630"/><rect x="5.2" y="0" width="0.8" height="6" fill="#8e5630"/>
<g fill="#f2f2f2"><rect x="1.3" y="1.6" width="1.5" height="1.4"/><rect x="3.5" y="1.6" width="1.4" height="1.4"/><rect x="6.5" y="1.6" width="1.5" height="1.4"/><rect x="8.7" y="1.6" width="1.4" height="1.4"/>
<rect x="1.3" y="4" width="1.5" height="1.4"/><rect x="3.5" y="4" width="1.4" height="1.4"/><rect x="6.5" y="4" width="1.5" height="1.4"/><rect x="8.7" y="4" width="1.4" height="1.4"/></g>
</pattern>
<pattern id="brk3" patternUnits="userSpaceOnUse" x="550.0" y="0" width="11" height="6">
<rect width="11" height="6" fill="#585450"/>
<rect y="0" width="11" height="1.1" fill="#8e5630"/>
<rect x="0" y="0" width="0.8" height="6" fill="#8e5630"/><rect x="5.2" y="0" width="0.8" height="6" fill="#8e5630"/>
<g fill="#f2f2f2"><rect x="1.3" y="1.6" width="1.5" height="1.4"/><rect x="3.5" y="1.6" width="1.4" height="1.4"/><rect x="6.5" y="1.6" width="1.5" height="1.4"/><rect x="8.7" y="1.6" width="1.4" height="1.4"/>
<rect x="1.3" y="4" width="1.5" height="1.4"/><rect x="3.5" y="4" width="1.4" height="1.4"/><rect x="6.5" y="4" width="1.5" height="1.4"/><rect x="8.7" y="4" width="1.4" height="1.4"/></g>
</pattern>
<pattern id="brk4" patternUnits="userSpaceOnUse" x="711.0" y="0" width="11" height="6">
<rect width="11" height="6" fill="#585450"/>
<rect y="0" width="11" height="1.1" fill="#8e5630"/>
<rect x="0" y="0" width="0.8" height="6" fill="#8e5630"/><rect x="5.2" y="0" width="0.8" height="6" fill="#8e5630"/>
<g fill="#f2f2f2"><rect x="1.3" y="1.6" width="1.5" height="1.4"/><rect x="3.5" y="1.6" width="1.4" height="1.4"/><rect x="6.5" y="1.6" width="1.5" height="1.4"/><rect x="8.7" y="1.6" width="1.4" height="1.4"/>
<rect x="1.3" y="4" width="1.5" height="1.4"/><rect x="3.5" y="4" width="1.4" height="1.4"/><rect x="6.5" y="4" width="1.5" height="1.4"/><rect x="8.7" y="4" width="1.4" height="1.4"/></g>
</pattern>
<pattern id="brk5" patternUnits="userSpaceOnUse" x="711.0" y="0" width="11" height="6">
<rect width="11" height="6" fill="#585450"/>
<rect y="0" width="11" height="1.1" fill="#8e5630"/>
<rect x="0" y="0" width="0.8" height="6" fill="#8e5630"/><rect x="5.2" y="0" width="0.8" height="6" fill="#8e5630"/>
<g fill="#f2f2f2"><rect x="1.3" y="1.6" width="1.5" height="1.4"/><rect x="3.5" y="1.6" width="1.4" height="1.4"/><rect x="6.5" y="1.6" width="1.5" height="1.4"/><rect x="8.7" y="1.6" width="1.4" height="1.4"/>
<rect x="1.3" y="4" width="1.5" height="1.4"/><rect x="3.5" y="4" width="1.4" height="1.4"/><rect x="6.5" y="4" width="1.5" height="1.4"/><rect x="8.7" y="4" width="1.4" height="1.4"/></g>
</pattern>
<pattern id="brk6" patternUnits="userSpaceOnUse" x="711.0" y="0" width="11" height="6">
<rect width="11" height="6" fill="#585450"/>
<rect y="0" width="11" height="1.1" fill="#8e5630"/>
<rect x="0" y="0" width="0.8" height="6" fill="#8e5630"/><rect x="5.2" y="0" width="0.8" height="6" fill="#8e5630"/>
<g fill="#f2f2f2"><rect x="1.3" y="1.6" width="1.5" height="1.4"/><rect x="3.5" y="1.6" width="1.4" height="1.4"/><rect x="6.5" y="1.6" width="1.5" height="1.4"/><rect x="8.7" y="1.6" width="1.4" height="1.4"/>
<rect x="1.3" y="4" width="1.5" height="1.4"/><rect x="3.5" y="4" width="1.4" height="1.4"/><rect x="6.5" y="4" width="1.5" height="1.4"/><rect x="8.7" y="4" width="1.4" height="1.4"/></g>
</pattern>
<pattern id="brk7" patternUnits="userSpaceOnUse" x="599.0" y="0" width="11" height="6">
<rect width="11" height="6" fill="#585450"/>
<rect y="0" width="11" height="1.1" fill="#8e5630"/>
<rect x="0" y="0" width="0.8" height="6" fill="#8e5630"/><rect x="5.2" y="0" width="0.8" height="6" fill="#8e5630"/>
<g fill="#f2f2f2"><rect x="1.3" y="1.6" width="1.5" height="1.4"/><rect x="3.5" y="1.6" width="1.4" height="1.4"/><rect x="6.5" y="1.6" width="1.5" height="1.4"/><rect x="8.7" y="1.6" width="1.4" height="1.4"/>
<rect x="1.3" y="4" width="1.5" height="1.4"/><rect x="3.5" y="4" width="1.4" height="1.4"/><rect x="6.5" y="4" width="1.5" height="1.4"/><rect x="8.7" y="4" width="1.4" height="1.4"/></g>
</pattern>
<pattern id="brk8" patternUnits="userSpaceOnUse" x="661.0" y="0" width="11" height="6">
<rect width="11" height="6" fill="#585450"/>
<rect y="0" width="11" height="1.1" fill="#8e5630"/>
<rect x="0" y="0" width="0.8" height="6" fill="#8e5630"/><rect x="5.2" y="0" width="0.8" height="6" fill="#8e5630"/>
<g fill="#f2f2f2"><rect x="1.3" y="1.6" width="1.5" height="1.4"/><rect x="3.5" y="1.6" width="1.4" height="1.4"/><rect x="6.5" y="1.6" width="1.5" height="1.4"/><rect x="8.7" y="1.6" width="1.4" height="1.4"/>
<rect x="1.3" y="4" width="1.5" height="1.4"/><rect x="3.5" y="4" width="1.4" height="1.4"/><rect x="6.5" y="4" width="1.5" height="1.4"/><rect x="8.7" y="4" width="1.4" height="1.4"/></g>
</pattern>
<pattern id="brk9" patternUnits="userSpaceOnUse" x="830.5" y="0" width="11" height="6">
<rect width="11" height="6" fill="#585450"/>
<rect y="0" width="11" height="1.1" fill="#8e5630"/>
<rect x="0" y="0" width="0.8" height="6" fill="#8e5630"/><rect x="5.2" y="0" width="0.8" height="6" fill="#8e5630"/>
<g fill="#f2f2f2"><rect x="1.3" y="1.6" width="1.5" height="1.4"/><rect x="3.5" y="1.6" width="1.4" height="1.4"/><rect x="6.5" y="1.6" width="1.5" height="1.4"/><rect x="8.7" y="1.6" width="1.4" height="1.4"/>
<rect x="1.3" y="4" width="1.5" height="1.4"/><rect x="3.5" y="4" width="1.4" height="1.4"/><rect x="6.5" y="4" width="1.5" height="1.4"/><rect x="8.7" y="4" width="1.4" height="1.4"/></g>
</pattern>
<pattern id="brk10" patternUnits="userSpaceOnUse" x="830.5" y="0" width="11" height="6">
<rect width="11" height="6" fill="#585450"/>
<rect y="0" width="11" height="1.1" fill="#8e5630"/>
<rect x="0" y="0" width="0.8" height="6" fill="#8e5630"/><rect x="5.2" y="0" width="0.8" height="6" fill="#8e5630"/>
<g fill="#f2f2f2"><rect x="1.3" y="1.6" width="1.5" height="1.4"/><rect x="3.5" y="1.6" width="1.4" height="1.4"/><rect x="6.5" y="1.6" width="1.5" height="1.4"/><rect x="8.7" y="1.6" width="1.4" height="1.4"/>
<rect x="1.3" y="4" width="1.5" height="1.4"/><rect x="3.5" y="4" width="1.4" height="1.4"/><rect x="6.5" y="4" width="1.5" height="1.4"/><rect x="8.7" y="4" width="1.4" height="1.4"/></g>
</pattern>
<pattern id="brk11" patternUnits="userSpaceOnUse" x="830.5" y="0" width="11" height="6">
<rect width="11" height="6" fill="#585450"/>
<rect y="0" width="11" height="1.1" fill="#8e5630"/>
<rect x="0" y="0" width="0.8" height="6" fill="#8e5630"/><rect x="5.2" y="0" width="0.8" height="6" fill="#8e5630"/>
<g fill="#f2f2f2"><rect x="1.3" y="1.6" width="1.5" height="1.4"/><rect x="3.5" y="1.6" width="1.4" height="1.4"/><rect x="6.5" y="1.6" width="1.5" height="1.4"/><rect x="8.7" y="1.6" width="1.4" height="1.4"/>
<rect x="1.3" y="4" width="1.5" height="1.4"/><rect x="3.5" y="4" width="1.4" height="1.4"/><rect x="6.5" y="4" width="1.5" height="1.4"/><rect x="8.7" y="4" width="1.4" height="1.4"/></g>
</pattern>
<pattern id="brk12" patternUnits="userSpaceOnUse" x="830.5" y="0" width="11" height="6">
<rect width="11" height="6" fill="#585450"/>
<rect y="0" width="11" height="1.1" fill="#8e5630"/>
<rect x="0" y="0" width="0.8" height="6" fill="#8e5630"/><rect x="5.2" y="0" width="0.8" height="6" fill="#8e5630"/>
<g fill="#f2f2f2"><rect x="1.3" y="1.6" width="1.5" height="1.4"/><rect x="3.5" y="1.6" width="1.4" height="1.4"/><rect x="6.5" y="1.6" width="1.5" height="1.4"/><rect x="8.7" y="1.6" width="1.4" height="1.4"/>
<rect x="1.3" y="4" width="1.5" height="1.4"/><rect x="3.5" y="4" width="1.4" height="1.4"/><rect x="6.5" y="4" width="1.5" height="1.4"/><rect x="8.7" y="4" width="1.4" height="1.4"/></g>
</pattern>
<pattern id="brk13" patternUnits="userSpaceOnUse" x="932.0" y="0" width="11" height="6">
<rect width="11" height="6" fill="#585450"/>
<rect y="0" width="11" height="1.1" fill="#8e5630"/>
<rect x="0" y="0" width="0.8" height="6" fill="#8e5630"/><rect x="5.2" y="0" width="0.8" height="6" fill="#8e5630"/>
<g fill="#f2f2f2"><rect x="1.3" y="1.6" width="1.5" height="1.4"/><rect x="3.5" y="1.6" width="1.4" height="1.4"/><rect x="6.5" y="1.6" width="1.5" height="1.4"/><rect x="8.7" y="1.6" width="1.4" height="1.4"/>
<rect x="1.3" y="4" width="1.5" height="1.4"/><rect x="3.5" y="4" width="1.4" height="1.4"/><rect x="6.5" y="4" width="1.5" height="1.4"/><rect x="8.7" y="4" width="1.4" height="1.4"/></g>
</pattern>
<pattern id="brk14" patternUnits="userSpaceOnUse" x="932.0" y="0" width="11" height="6">
<rect width="11" height="6" fill="#585450"/>
<rect y="0" width="11" height="1.1" fill="#8e5630"/>
<rect x="0" y="0" width="0.8" height="6" fill="#8e5630"/><rect x="5.2" y="0" width="0.8" height="6" fill="#8e5630"/>
<g fill="#f2f2f2"><rect x="1.3" y="1.6" width="1.5" height="1.4"/><rect x="3.5" y="1.6" width="1.4" height="1.4"/><rect x="6.5" y="1.6" width="1.5" height="1.4"/><rect x="8.7" y="1.6" width="1.4" height="1.4"/>
<rect x="1.3" y="4" width="1.5" height="1.4"/><rect x="3.5" y="4" width="1.4" height="1.4"/><rect x="6.5" y="4" width="1.5" height="1.4"/><rect x="8.7" y="4" width="1.4" height="1.4"/></g>
</pattern>
<pattern id="brk15" patternUnits="userSpaceOnUse" x="932.0" y="0" width="11" height="6">
<rect width="11" height="6" fill="#585450"/>
<rect y="0" width="11" height="1.1" fill="#8e5630"/>
<rect x="0" y="0" width="0.8" height="6" fill="#8e5630"/><rect x="5.2" y="0" width="0.8" height="6" fill="#8e5630"/>
<g fill="#f2f2f2"><rect x="1.3" y="1.6" width="1.5" height="1.4"/><rect x="3.5" y="1.6" width="1.4" height="1.4"/><rect x="6.5" y="1.6" width="1.5" height="1.4"/><rect x="8.7" y="1.6" width="1.4" height="1.4"/>
<rect x="1.3" y="4" width="1.5" height="1.4"/><rect x="3.5" y="4" width="1.4" height="1.4"/><rect x="6.5" y="4" width="1.5" height="1.4"/><rect x="8.7" y="4" width="1.4" height="1.4"/></g>
</pattern>
<pattern id="brk16" patternUnits="userSpaceOnUse" x="879.0" y="0" width="11" height="6">
<rect width="11" height="6" fill="#585450"/>
<rect y="0" width="11" height="1.1" fill="#8e5630"/>
<rect x="0" y="0" width="0.8" height="6" fill="#8e5630"/><rect x="5.2" y="0" width="0.8" height="6" fill="#8e5630"/>
<g fill="#f2f2f2"><rect x="1.3" y="1.6" width="1.5" height="1.4"/><rect x="3.5" y="1.6" width="1.4" height="1.4"/><rect x="6.5" y="1.6" width="1.5" height="1.4"/><rect x="8.7" y="1.6" width="1.4" height="1.4"/>
<rect x="1.3" y="4" width="1.5" height="1.4"/><rect x="3.5" y="4" width="1.4" height="1.4"/><rect x="6.5" y="4" width="1.5" height="1.4"/><rect x="8.7" y="4" width="1.4" height="1.4"/></g>
</pattern>
<pattern id="brk17" patternUnits="userSpaceOnUse" x="1047.0" y="0" width="11" height="6">
<rect width="11" height="6" fill="#585450"/>
<rect y="0" width="11" height="1.1" fill="#8e5630"/>
<rect x="0" y="0" width="0.8" height="6" fill="#8e5630"/><rect x="5.2" y="0" width="0.8" height="6" fill="#8e5630"/>
<g fill="#f2f2f2"><rect x="1.3" y="1.6" width="1.5" height="1.4"/><rect x="3.5" y="1.6" width="1.4" height="1.4"/><rect x="6.5" y="1.6" width="1.5" height="1.4"/><rect x="8.7" y="1.6" width="1.4" height="1.4"/>
<rect x="1.3" y="4" width="1.5" height="1.4"/><rect x="3.5" y="4" width="1.4" height="1.4"/><rect x="6.5" y="4" width="1.5" height="1.4"/><rect x="8.7" y="4" width="1.4" height="1.4"/></g>
</pattern>
<pattern id="brk18" patternUnits="userSpaceOnUse" x="1095.0" y="0" width="11" height="6">
<rect width="11" height="6" fill="#585450"/>
<rect y="0" width="11" height="1.1" fill="#8e5630"/>
<rect x="0" y="0" width="0.8" height="6" fill="#8e5630"/><rect x="5.2" y="0" width="0.8" height="6" fill="#8e5630"/>
<g fill="#f2f2f2"><rect x="1.3" y="1.6" width="1.5" height="1.4"/><rect x="3.5" y="1.6" width="1.4" height="1.4"/><rect x="6.5" y="1.6" width="1.5" height="1.4"/><rect x="8.7" y="1.6" width="1.4" height="1.4"/>
<rect x="1.3" y="4" width="1.5" height="1.4"/><rect x="3.5" y="4" width="1.4" height="1.4"/><rect x="6.5" y="4" width="1.5" height="1.4"/><rect x="8.7" y="4" width="1.4" height="1.4"/></g>
</pattern>
</defs>
<rect x="550" y="233.5" width="12" height="129.5" fill="#d2d2d2" stroke="#7a7a7a" stroke-width="0.6" rx="0"/>
<rect x="550.5" y="234.0" width="11" height="11.5" fill="url(#brk1)"/>
<rect x="550.5" y="258.0" width="11" height="46.5" fill="url(#brk2)"/>
<rect x="550.5" y="317.0" width="11" height="40.0" fill="url(#brk3)"/>
<rect x="711" y="233.5" width="12" height="129.5" fill="#d2d2d2" stroke="#7a7a7a" stroke-width="0.6" rx="0"/>
<rect x="711.5" y="234.0" width="11" height="11.5" fill="url(#brk4)"/>
<rect x="711.5" y="258.0" width="11" height="46.5" fill="url(#brk5)"/>
<rect x="711.5" y="317.0" width="11" height="40.0" fill="url(#brk6)"/>
<rect x="550" y="228" width="62.5" height="6" fill="#d2d2d2" stroke="#7a7a7a" stroke-width="0.6" rx="1"/>
<rect x="661" y="228" width="62" height="6" fill="#d2d2d2" stroke="#7a7a7a" stroke-width="0.6" rx="1"/>
<rect x="599.5" y="234" width="12.5" height="12" fill="url(#brk7)"/>
<rect x="661.5" y="234" width="13" height="12" fill="url(#brk8)"/>
<rect x="599" y="246" width="76.5" height="6.5" fill="#d2d2d2" stroke="#7a7a7a" stroke-width="0.6" rx="0"/>
<rect x="545.5" y="363" width="182.5" height="7.5" fill="#d2d2d2" stroke="#7a7a7a" stroke-width="0.6" rx="1"/>
<rect x="630.5" y="233" width="13.0" height="101" fill="#fff" stroke="#7a7a7a" stroke-width="0.7" rx="0"/>
<rect x="630" y="228" width="14" height="6" fill="#e6e6e6" stroke="#7a7a7a" stroke-width="0.6" rx="1"/>
<line x1="562" y1="280.5" x2="711" y2="280.5" stroke="#555" stroke-width="0.7"/>
<rect x="523" y="271.5" width="43" height="8.0" fill="#fff" stroke="#7a7a7a" stroke-width="0.7" rx="0"/>
<rect x="563" y="270.5" width="6" height="10.0" fill="#bdbdbd" stroke="#777" stroke-width="0.5" rx="0"/>
<rect x="569" y="258" width="6.5" height="50" fill="#fff" stroke="#7a7a7a" stroke-width="0.7" rx="0"/>
<rect x="568.5" y="267" width="7.5" height="3" fill="#bdbdbd" stroke="#777" stroke-width="0.5" rx="0"/>
<rect x="568.5" y="283" width="7.5" height="3" fill="#bdbdbd" stroke="#777" stroke-width="0.5" rx="0"/>
<line x1="538" y1="275.5" x2="547" y2="275.5" stroke="#c8a0a0" stroke-width="0.8"/>
<path d="M543 273.7 L548 275.5 L543 277.3Z" fill="#d22"/>
<rect x="692.5" y="258" width="10.5" height="55" fill="#fff" stroke="#7a7a7a" stroke-width="0.7" rx="0"/>
<rect x="692" y="266" width="11.5" height="4" fill="#bdbdbd" stroke="#777" stroke-width="0.5" rx="0"/>
<rect x="692" y="285" width="11.5" height="3" fill="#bdbdbd" stroke="#777" stroke-width="0.5" rx="0"/>
<rect x="707" y="272" width="43" height="8.5" fill="#fff" stroke="#7a7a7a" stroke-width="0.7" rx="0"/>
<rect x="703" y="271" width="5" height="10" fill="#bdbdbd" stroke="#777" stroke-width="0.5" rx="0"/>
<line x1="724" y1="276" x2="733" y2="276" stroke="#c8a0a0" stroke-width="0.8"/>
<path d="M729 274.2 L734 276 L729 277.8Z" fill="#d22"/>
<line x1="619.5" y1="280.5" x2="619.5" y2="363" stroke="#444" stroke-width="0.8"/>
<line x1="617.5" y1="278.5" x2="621.5" y2="282.5" stroke="#444" stroke-width="0.8"/>
<line x1="617.5" y1="361" x2="621.5" y2="365" stroke="#444" stroke-width="0.8"/>
<line x1="562" y1="378.8" x2="711" y2="378.8" stroke="#444" stroke-width="0.8"/>
<line x1="562" y1="374" x2="562" y2="382" stroke="#444" stroke-width="0.7"/>
<line x1="711" y1="374" x2="711" y2="382" stroke="#444" stroke-width="0.7"/>
<text x="603" y="327" font-size="13.5" fill="#222" font-family="Liberation Sans">h</text>
<text x="610.83" y="329.5" font-size="9.45" fill="#222" font-family="Liberation Sans">u</text>
<text x="633" y="392" font-size="13.5" fill="#222" font-family="Liberation Sans">L</text>
<text x="592.5" y="274" font-size="9.6" fill="#222" font-family="Liberation Sans">N.A.</text>
<line x1="591" y1="275.5" x2="613" y2="275.5" stroke="#444" stroke-width="0.6"/>
<circle cx="591" cy="279" r="1.2" fill="#222"/>
<rect x="830.5" y="233.5" width="12.5" height="129.5" fill="#d2d2d2" stroke="#7a7a7a" stroke-width="0.6" rx="0"/>
<rect x="831.0" y="234.0" width="11.5" height="11.5" fill="url(#brk9)"/>
<rect x="831.0" y="258.0" width="11.5" height="46.5" fill="url(#brk10)"/>
<rect x="831.0" y="317.0" width="11.5" height="10.5" fill="url(#brk11)"/>
<rect x="831.0" y="334.5" width="11.5" height="22.5" fill="url(#brk12)"/>
<rect x="932" y="252" width="12" height="111" fill="#d2d2d2" stroke="#7a7a7a" stroke-width="0.6" rx="0"/>
<rect x="932.5" y="252.5" width="11" height="52" fill="url(#brk13)"/>
<rect x="932.5" y="317.0" width="11" height="10.5" fill="url(#brk14)"/>
<rect x="932.5" y="334.5" width="11" height="22.5" fill="url(#brk15)"/>
<rect x="830.5" y="228" width="63.0" height="6" fill="#d2d2d2" stroke="#7a7a7a" stroke-width="0.6" rx="1"/>
<rect x="879.5" y="234" width="13.5" height="12" fill="url(#brk16)"/>
<rect x="879" y="246" width="65" height="6.5" fill="#d2d2d2" stroke="#7a7a7a" stroke-width="0.6" rx="0"/>
<rect x="824.5" y="363" width="126.0" height="7.5" fill="#d2d2d2" stroke="#7a7a7a" stroke-width="0.6" rx="1"/>
<rect x="843" y="293" width="89" height="35" fill="url(#grv)"/>
<rect x="843" y="328" width="89" height="6" fill="#e4e4e4" stroke="#999" stroke-width="0.5" rx="0"/>
<rect x="845" y="329.5" width="2.4" height="3.5" fill="#fff" stroke="#aaa" stroke-width="0.4"/>
<rect x="849" y="329.5" width="2.4" height="3.5" fill="#fff" stroke="#aaa" stroke-width="0.4"/>
<rect x="853" y="329.5" width="2.4" height="3.5" fill="#fff" stroke="#aaa" stroke-width="0.4"/>
<rect x="857" y="329.5" width="2.4" height="3.5" fill="#fff" stroke="#aaa" stroke-width="0.4"/>
<rect x="861" y="329.5" width="2.4" height="3.5" fill="#fff" stroke="#aaa" stroke-width="0.4"/>
<rect x="865" y="329.5" width="2.4" height="3.5" fill="#fff" stroke="#aaa" stroke-width="0.4"/>
<rect x="869" y="329.5" width="2.4" height="3.5" fill="#fff" stroke="#aaa" stroke-width="0.4"/>
<rect x="873" y="329.5" width="2.4" height="3.5" fill="#fff" stroke="#aaa" stroke-width="0.4"/>
<rect x="877" y="329.5" width="2.4" height="3.5" fill="#fff" stroke="#aaa" stroke-width="0.4"/>
<rect x="881" y="329.5" width="2.4" height="3.5" fill="#fff" stroke="#aaa" stroke-width="0.4"/>
<rect x="885" y="329.5" width="2.4" height="3.5" fill="#fff" stroke="#aaa" stroke-width="0.4"/>
<rect x="889" y="329.5" width="2.4" height="3.5" fill="#fff" stroke="#aaa" stroke-width="0.4"/>
<rect x="893" y="329.5" width="2.4" height="3.5" fill="#fff" stroke="#aaa" stroke-width="0.4"/>
<rect x="897" y="329.5" width="2.4" height="3.5" fill="#fff" stroke="#aaa" stroke-width="0.4"/>
<rect x="901" y="329.5" width="2.4" height="3.5" fill="#fff" stroke="#aaa" stroke-width="0.4"/>
<rect x="905" y="329.5" width="2.4" height="3.5" fill="#fff" stroke="#aaa" stroke-width="0.4"/>
<rect x="909" y="329.5" width="2.4" height="3.5" fill="#fff" stroke="#aaa" stroke-width="0.4"/>
<rect x="913" y="329.5" width="2.4" height="3.5" fill="#fff" stroke="#aaa" stroke-width="0.4"/>
<rect x="917" y="329.5" width="2.4" height="3.5" fill="#fff" stroke="#aaa" stroke-width="0.4"/>
<rect x="921" y="329.5" width="2.4" height="3.5" fill="#fff" stroke="#aaa" stroke-width="0.4"/>
<rect x="925" y="329.5" width="2.4" height="3.5" fill="#fff" stroke="#aaa" stroke-width="0.4"/>
<rect x="929" y="329.5" width="2.4" height="3.5" fill="#fff" stroke="#aaa" stroke-width="0.4"/>
<rect x="900.5" y="233" width="12.0" height="107" fill="#fff" stroke="#777" stroke-width="0.7" rx="0"/>
<rect x="900" y="228" width="13" height="6" fill="#e6e6e6" stroke="#7a7a7a" stroke-width="0.6" rx="1"/>
<rect x="804" y="272" width="56" height="10" fill="#fff" stroke="#7a7a7a" stroke-width="0.7" rx="0"/>
<rect x="857" y="271" width="6" height="12" fill="#bdbdbd" stroke="#777" stroke-width="0.5" rx="0"/>
<rect x="864" y="266" width="9.5" height="80" fill="#fff" stroke="#7a7a7a" stroke-width="0.7" rx="0"/>
<rect x="862.5" y="265.5" width="12.5" height="4.5" fill="#bdbdbd" stroke="#777" stroke-width="0.5" rx="0"/>
<rect x="862.5" y="285" width="12.5" height="5" fill="#bdbdbd" stroke="#777" stroke-width="0.5" rx="0"/>
<line x1="825" y1="277" x2="834" y2="277" stroke="#c8a0a0" stroke-width="0.8"/>
<path d="M830 275.2 L835 277 L830 278.8Z" fill="#d22"/>
<line x1="868.5" y1="306" x2="868.5" y2="315" stroke="#c8a0a0" stroke-width="0.8"/>
<path d="M866.7 311 L868.5 316 L870.3 311Z" fill="#d22"/>
<rect x="922" y="283" width="49" height="10" fill="#fff" stroke="#7a7a7a" stroke-width="0.7" rx="0"/>
<line x1="946" y1="288" x2="955" y2="288" stroke="#c8a0a0" stroke-width="0.8"/>
<path d="M951 286.2 L956 288 L951 289.8Z" fill="#d22"/>
<line x1="813" y1="293" x2="813" y2="364" stroke="#444" stroke-width="0.8"/>
<line x1="809" y1="293" x2="825" y2="293" stroke="#444" stroke-width="0.6"/>
<line x1="809" y1="364" x2="820" y2="364" stroke="#444" stroke-width="0.6"/>
<line x1="843" y1="378.8" x2="932" y2="378.8" stroke="#444" stroke-width="0.8"/>
<line x1="843" y1="374" x2="843" y2="382" stroke="#444" stroke-width="0.7"/>
<line x1="932" y1="374" x2="932" y2="382" stroke="#444" stroke-width="0.7"/>
<text x="797" y="333" font-size="13.5" fill="#222" font-family="Liberation Sans">h</text>
<text x="804.83" y="335.5" font-size="9.45" fill="#222" font-family="Liberation Sans">u</text>
<text x="882" y="392" font-size="13" fill="#222" font-family="Liberation Sans">D</text>
<text x="891.5" y="395" font-size="8.5" fill="#222" font-family="Liberation Sans">i</text>
<rect x="1047" y="233.5" width="12" height="192.5" fill="#d2d2d2" stroke="#7a7a7a" stroke-width="0.6" rx="0"/>
<rect x="1118" y="251.5" width="11" height="174.5" fill="#d2d2d2" stroke="#7a7a7a" stroke-width="0.6" rx="0"/>
<rect x="1047.5" y="234" width="11" height="12" fill="url(#brk17)"/>
<rect x="1095.5" y="234" width="10" height="12" fill="url(#brk18)"/>
<rect x="1047.5" y="256.5" width="11.0" height="76.0" fill="url(#obrk)"/>
<rect x="1047.5" y="344" width="11.0" height="70" fill="url(#obrk)"/>
<rect x="1118.5" y="256.5" width="10.0" height="76.0" fill="url(#obrk)"/>
<rect x="1118.5" y="344" width="10.0" height="70" fill="url(#obrk)"/>
<rect x="1047" y="228.5" width="58.5" height="5.5" fill="#d2d2d2" stroke="#7a7a7a" stroke-width="0.6" rx="1"/>
<rect x="1095" y="246" width="34" height="6" fill="#d2d2d2" stroke="#7a7a7a" stroke-width="0.6" rx="0"/>
<rect x="1061" y="302" width="55.5" height="104" fill="url(#dots)"/>
<rect x="1059" y="408" width="59" height="18" fill="url(#grv)"/>
<text x="1078.5" y="407.3" font-size="6.8" fill="#666" font-family="Liberation Sans">BRITA</text>
<rect x="1020" y="283" width="56" height="9.5" fill="#fff" stroke="#7a7a7a" stroke-width="0.7" rx="0"/>
<path d="M1076 283 Q1093 283 1093 300 L1093 303 L1083.5 303 L1083.5 300 Q1083.5 292.5 1076 292.5Z" fill="#fff" stroke="#8c8c8c" stroke-width="0.7"/>
<rect x="1074" y="282" width="4" height="11.5" fill="#d0d0d0" stroke="#777" stroke-width="0.5" rx="0"/>
<rect x="1082.5" y="299" width="11.5" height="4.5" fill="#d0d0d0" stroke="#777" stroke-width="0.5" rx="0"/>
<line x1="1044" y1="288" x2="1053" y2="288" stroke="#c8a0a0" stroke-width="0.8"/>
<path d="M1049 286.2 L1054 288 L1049 289.8Z" fill="#d22"/>
<line x1="1037.7" y1="293" x2="1037.7" y2="426" stroke="#444" stroke-width="0.8"/>
<line x1="1035.7" y1="291" x2="1039.7" y2="295" stroke="#444" stroke-width="0.7"/>
<line x1="1035.7" y1="424" x2="1039.7" y2="428" stroke="#444" stroke-width="0.7"/>
<line x1="1059" y1="434.6" x2="1118" y2="434.6" stroke="#444" stroke-width="0.8"/>
<line x1="1059" y1="430" x2="1059" y2="438" stroke="#444" stroke-width="0.7"/>
<line x1="1118" y1="430" x2="1118" y2="438" stroke="#444" stroke-width="0.7"/>
<text x="1022" y="365" font-size="13.5" fill="#222" font-family="Liberation Sans">h</text>
<text x="1029.83" y="367.5" font-size="9.45" fill="#222" font-family="Liberation Sans">u</text>
<text x="1083" y="448" font-size="13" fill="#222" font-family="Liberation Sans">D</text>
<text x="1092.3" y="451" font-size="8.5" fill="#222" font-family="Liberation Sans">i</text>
</svg>
</body></html>
